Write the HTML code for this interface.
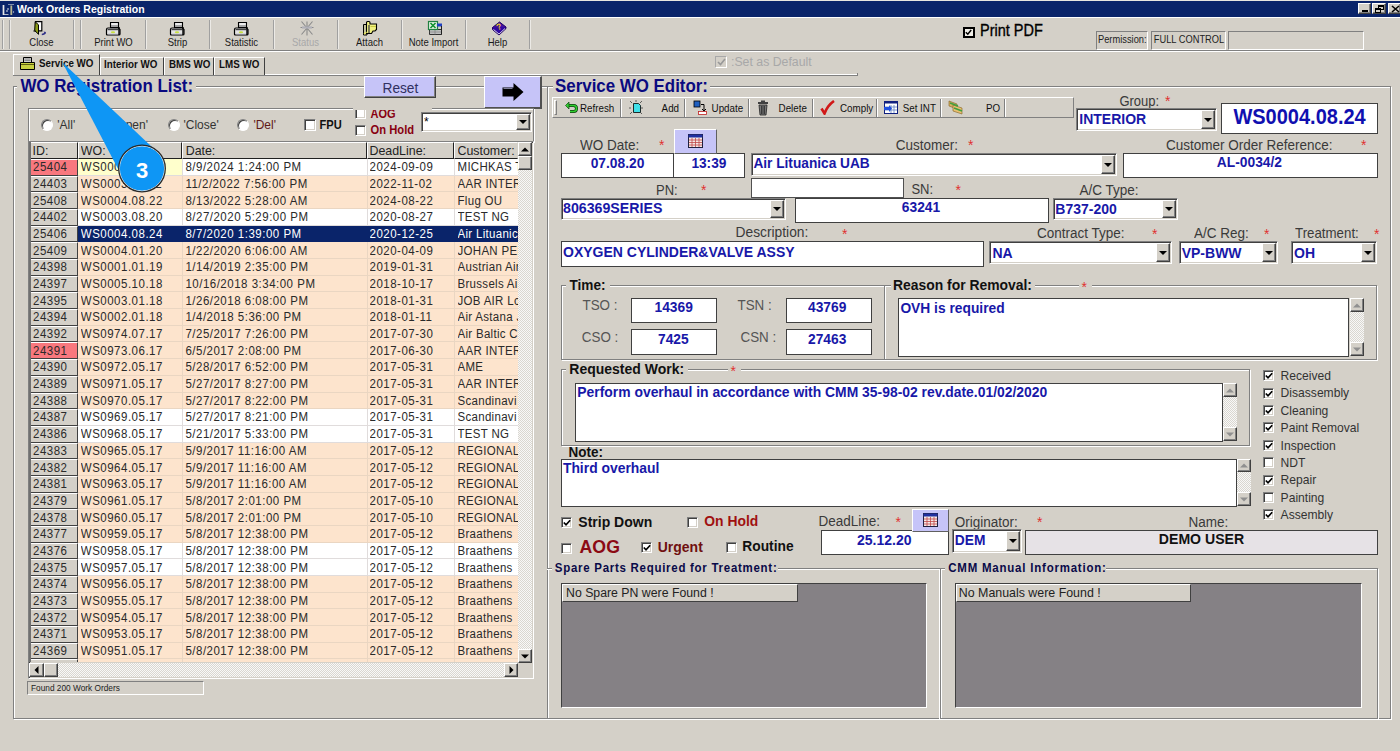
<!DOCTYPE html><html><head><meta charset="utf-8">
<style>
*{box-sizing:border-box;margin:0;padding:0}
html,body{width:1400px;height:751px;overflow:hidden;background:#D4D0C8;font-family:"Liberation Sans",sans-serif;font-size:11px;color:#000;position:relative}
.a{position:absolute}
.t{position:absolute;white-space:nowrap;line-height:1;transform:scaleY(1.08);transform-origin:0 85%}
.fld{position:absolute;background:#fff;border-top:1px solid #808080;border-left:1px solid #808080;border-right:1px solid #fff;border-bottom:1px solid #fff;box-shadow:inset 1px 1px 0 #404040,inset -1px -1px 0 #D4D0C8}
.fld1{position:absolute;background:#fff;border:1px solid #404040;}
.btn{position:absolute;background:#D4D0C8;border-top:1px solid #fff;border-left:1px solid #fff;border-right:1px solid #404040;border-bottom:1px solid #404040;box-shadow:inset -1px -1px 0 #808080}
.grp{position:absolute;border:1px solid #808080;box-shadow:1px 1px 0 #fff,inset 1px 1px 0 #fff}
.vsep{position:absolute;width:2px;border-left:1px solid #808080;border-right:1px solid #fff}
.hsep{position:absolute;height:2px;border-top:1px solid #808080;border-bottom:1px solid #fff}
.nav{color:#0A0A80;font-weight:bold}
.bl{color:#1010A0;font-weight:bold}
.lab{position:absolute;white-space:nowrap;line-height:1;color:#333;font-size:13px}
.ast{position:absolute;white-space:nowrap;line-height:1;color:#E02020;font-size:12px}
.tbl{position:absolute;white-space:nowrap;line-height:1;color:#222;font-size:11px;text-align:center}
.dd{position:absolute;top:1px;right:1px;bottom:1px;width:16px;background:#D4D0C8;border-top:1px solid #fff;border-left:1px solid #fff;border-right:1px solid #404040;border-bottom:1px solid #404040;box-shadow:inset -1px -1px 0 #808080}
.dd:after{content:"";position:absolute;left:50%;top:50%;margin-left:-4px;margin-top:-2px;border-left:4px solid transparent;border-right:4px solid transparent;border-top:4px solid #000}
.cb{position:absolute;width:13px;height:13px;background:#fff;border-top:1px solid #808080;border-left:1px solid #808080;border-right:1px solid #fff;border-bottom:1px solid #fff;box-shadow:inset 1px 1px 0 #404040,inset -1px -1px 0 #D4D0C8}
.ck:after{content:"";position:absolute;left:2px;top:1px;width:6px;height:3px;border-left:2px solid #000;border-bottom:2px solid #000;transform:rotate(-50deg) translate(-1px,2px)}
.rd{position:absolute;width:12px;height:12px;border-radius:50%;background:#fff;border:1px solid;border-color:#808080 #fff #fff #808080;box-shadow:inset 1px 1px 0 #404040}
/* table */
.hc{position:absolute;top:142px;height:17px;background:#D4D0C8;border-top:1px solid #fff;border-left:1px solid #fff;border-right:1px solid #404040;border-bottom:1px solid #404040;font-size:12px;color:#222;padding:3px 0 0 3px;line-height:1;white-space:nowrap;overflow:hidden}
.rw{position:absolute;left:0;width:1400px;height:17px}
.rw div{position:absolute;top:0;height:17px;line-height:16px;font-size:12px;white-space:nowrap;overflow:hidden;padding-left:3px}
.rw .idc{left:29px;width:49px;border-top:1px solid #fff;border-bottom:1px solid #404040;border-right:1px solid #404040;padding-left:3px;line-height:15px}
.rw .c{border-bottom:1px solid #E6D6C6}
.sb{position:absolute;background:#D4D0C8;border-top:1px solid #fff;border-left:1px solid #fff;border-right:1px solid #404040;border-bottom:1px solid #404040;box-shadow:inset -1px -1px 0 #808080}
.track{position:absolute;background-color:#DAD7D0;background-image:linear-gradient(45deg,#F8F8F8 25%,transparent 25%,transparent 75%,#F8F8F8 75%),linear-gradient(45deg,#F8F8F8 25%,transparent 25%,transparent 75%,#F8F8F8 75%);background-size:2px 2px;background-position:0 0,1px 1px;opacity:1}
.tbt{position:absolute;top:17px;height:33px;text-align:center;font-size:11px;color:#222}
.tbt span{position:absolute;left:0;right:0;top:19px;line-height:1}
.tbt svg{position:absolute;left:50%;top:3px;margin-left:-8px}
.eb{position:absolute;top:97px;height:21px;font-size:10px;color:#222;white-space:nowrap;line-height:1}
</style></head><body>

</head><body>
<div class="a" style="left:0px;top:0px;width:1400px;height:1px;background:#E8E6E0"></div>
<div class="a" style="left:0px;top:1px;width:1400px;height:16px;background:#0A246A"></div>
<svg class="a" style="left:1px;top:2px" width="14" height="13"><path d="M2.5 3v10h5" stroke="#E8E8E8" stroke-width="1.7" fill="none"/><path d="M7 2.5h6" stroke="#8090B0" stroke-width="1" fill="none"/><path d="M10.3 3.5v10" stroke="#B8B890" stroke-width="1.8" fill="none"/><circle cx="7" cy="7" r="0.8" fill="#fff"/><circle cx="6" cy="9" r="0.8" fill="#fff"/><circle cx="12.5" cy="10" r="0.7" fill="#C0C8E0"/></svg>
<div class="t" style="left:17.0px;top:4.1px;font-size:10.5px;color:#fff;font-weight:bold;">Work Orders Registration</div>
<div class="btn" style="left:1358px;top:3px;width:13px;height:11px"><div class="a" style="left:3px;top:6px;width:6px;height:2px;background:#000"></div></div>
<div class="btn" style="left:1372px;top:3px;width:14px;height:11px"><svg class="a" style="left:2px;top:1px" width="9" height="8"><rect x="3.5" y="0.5" width="5" height="4" fill="none" stroke="#000"/><rect x="3" y="0" width="6" height="2" fill="#000"/><rect x="0.5" y="3.5" width="5" height="4" fill="#D4D0C8" stroke="#000"/><rect x="0" y="3" width="6" height="2" fill="#000"/></svg></div>
<div class="btn" style="left:1388px;top:3px;width:13px;height:11px"><svg class="a" style="left:2px;top:1px" width="9" height="8"><path d="M1 1L8 7M8 1L1 7" stroke="#000" stroke-width="1.6"/></svg></div>
<div class="a" style="left:0px;top:17px;width:1400px;height:1px;background:#fff"></div>
<div class="a" style="left:2px;top:20px;width:2px;height:29px;border-left:1px solid #A0A0A0;border-right:1px solid #ECEAE6"></div>
<div class="a" style="left:9px;top:20px;width:2px;height:29px;border-left:1px solid #A0A0A0;border-right:1px solid #ECEAE6"></div>
<div class="a" style="left:73px;top:20px;width:2px;height:29px;border-left:1px solid #A0A0A0;border-right:1px solid #ECEAE6"></div>
<div class="a" style="left:80px;top:20px;width:2px;height:29px;border-left:1px solid #A0A0A0;border-right:1px solid #ECEAE6"></div>
<div class="a" style="left:145px;top:20px;width:2px;height:29px;border-left:1px solid #A0A0A0;border-right:1px solid #ECEAE6"></div>
<div class="a" style="left:209px;top:20px;width:2px;height:29px;border-left:1px solid #A0A0A0;border-right:1px solid #ECEAE6"></div>
<div class="a" style="left:273px;top:20px;width:2px;height:29px;border-left:1px solid #A0A0A0;border-right:1px solid #ECEAE6"></div>
<div class="a" style="left:337px;top:20px;width:2px;height:29px;border-left:1px solid #A0A0A0;border-right:1px solid #ECEAE6"></div>
<div class="a" style="left:401px;top:20px;width:2px;height:29px;border-left:1px solid #A0A0A0;border-right:1px solid #ECEAE6"></div>
<div class="a" style="left:465px;top:20px;width:2px;height:29px;border-left:1px solid #A0A0A0;border-right:1px solid #ECEAE6"></div>
<div class="a" style="left:529px;top:20px;width:2px;height:29px;border-left:1px solid #A0A0A0;border-right:1px solid #ECEAE6"></div>
<div class="hsep" style="left:0px;top:50px;width:1400px;height:2px;"></div>
<svg class="a" style="left:30.5px;top:20px" width="18" height="17"><path d="M4.5 1.7h6.3v9.2h-6.3z" fill="#fff" stroke="#000" stroke-width="1.2"/><path d="M4.2 1.8l3.3 3v9.5l-3.8-3.8z" fill="#8A9A18" stroke="#000" stroke-width="1"/><path d="M2.5 11h2" stroke="#000" stroke-width="1.2"/><path d="M10.8 14.5q2.5 0 3.5-1.8" stroke="#303088" stroke-width="1.5" fill="none"/><path d="M12.5 11.5l2.5 0.5-0.8 2.2z" fill="#303088"/></svg>
<div class="t" style="left:9.5px;width:64.0px;text-align:center;top:37.6px;font-size:9.5px;color:#1a1a1a;">Close</div>
<svg class="a" style="left:104.5px;top:20px" width="18" height="17"><path d="M5.5 2.5h8v5h-8z" fill="#D8D8D8" stroke="#000" stroke-width="1.1"/><path d="M6.5 4h6" stroke="#fff" stroke-width="1"/><path d="M6 6h7" stroke="#707070" stroke-width="1"/><path d="M1.5 9.5q0-1.5 1.5-1.5h10.5l1.5 1.5v4.5q0 1-1 1h-11.5q-1 0-1-1z" fill="#E4E4E4" stroke="#000" stroke-width="1.2"/><path d="M2.5 9.6h11" stroke="#404040" stroke-width="1.2"/><ellipse cx="8" cy="12.3" rx="2.2" ry="1" fill="#C8E040"/><path d="M14 7v8" stroke="#000" stroke-width="1.4"/><path d="M3 14.3h10" stroke="#9090A0" stroke-width="0.8"/></svg>
<div class="t" style="left:81.5px;width:64.0px;text-align:center;top:37.6px;font-size:9.5px;color:#1a1a1a;">Print WO</div>
<svg class="a" style="left:168.5px;top:20px" width="18" height="17"><path d="M5.5 2.5h8v5h-8z" fill="#D8D8D8" stroke="#000" stroke-width="1.1"/><path d="M6.5 4h6" stroke="#fff" stroke-width="1"/><path d="M6 6h7" stroke="#707070" stroke-width="1"/><path d="M1.5 9.5q0-1.5 1.5-1.5h10.5l1.5 1.5v4.5q0 1-1 1h-11.5q-1 0-1-1z" fill="#E4E4E4" stroke="#000" stroke-width="1.2"/><path d="M2.5 9.6h11" stroke="#404040" stroke-width="1.2"/><ellipse cx="8" cy="12.3" rx="2.2" ry="1" fill="#C8E040"/><path d="M14 7v8" stroke="#000" stroke-width="1.4"/><path d="M3 14.3h10" stroke="#9090A0" stroke-width="0.8"/></svg>
<div class="t" style="left:145.5px;width:64.0px;text-align:center;top:37.6px;font-size:9.5px;color:#1a1a1a;">Strip</div>
<svg class="a" style="left:232.5px;top:20px" width="18" height="17"><path d="M5.5 2.5h8v5h-8z" fill="#D8D8D8" stroke="#000" stroke-width="1.1"/><path d="M6.5 4h6" stroke="#fff" stroke-width="1"/><path d="M6 6h7" stroke="#707070" stroke-width="1"/><path d="M1.5 9.5q0-1.5 1.5-1.5h10.5l1.5 1.5v4.5q0 1-1 1h-11.5q-1 0-1-1z" fill="#E4E4E4" stroke="#000" stroke-width="1.2"/><path d="M2.5 9.6h11" stroke="#404040" stroke-width="1.2"/><ellipse cx="8" cy="12.3" rx="2.2" ry="1" fill="#C8E040"/><path d="M14 7v8" stroke="#000" stroke-width="1.4"/><path d="M3 14.3h10" stroke="#9090A0" stroke-width="0.8"/></svg>
<div class="t" style="left:209.5px;width:64.0px;text-align:center;top:37.6px;font-size:9.5px;color:#1a1a1a;">Statistic</div>
<svg class="a" style="left:298.5px;top:20px" width="18" height="17"><path d="M8 1.5v14M1.5 7.5h13M2.5 1.5l11 13M13.5 1.5l-11 13" stroke="#8A8A8A" stroke-width="1.1"/><path d="M3 7.5h10" stroke="#B0B0B8" stroke-width="2.2"/></svg>
<div class="t" style="left:273.5px;width:64.0px;text-align:center;top:37.6px;font-size:9.5px;color:#A8A8A8;">Status</div>
<svg class="a" style="left:361.5px;top:20px" width="18" height="17"><path d="M1.5 4.5h3.5v10.5h-3.5z" fill="#C8C8A0" stroke="#000" stroke-width="1"/><path d="M4.5 2.5q0-1 1-1h1.5q1 0 1 1v1.5h6.5v5.5l-1.5 1.5h-2l-1.5 2.5h-5z" fill="#F0F080" stroke="#000" stroke-width="1.1"/><path d="M7 5v8" stroke="#606050" stroke-width="1.6"/><path d="M8.5 6.5h5.5" stroke="#C8C840" stroke-width="1"/><path d="M2 14l2.5-2" stroke="#E8E860" stroke-width="1.5"/></svg>
<div class="t" style="left:337.5px;width:64.0px;text-align:center;top:37.6px;font-size:9.5px;color:#1a1a1a;">Attach</div>
<svg class="a" style="left:426.5px;top:20px" width="18" height="17"><path d="M2.5 9.5h12v5h-12z" fill="#C0C0C0" stroke="#303030" stroke-width="1"/><path d="M2.5 12h12M8 9.5v5" stroke="#808080" stroke-width="0.7"/><rect x="1.5" y="1.5" width="9" height="8" fill="#E0F0E0" stroke="#208040" stroke-width="1.2"/><path d="M3.5 3l5 5M8.5 3l-5 5" stroke="#109030" stroke-width="1.6"/><rect x="10" y="3.5" width="5" height="3" fill="#2040C0"/><path d="M14.5 6v8.5" stroke="#202020" stroke-width="1"/></svg>
<div class="t" style="left:401.5px;width:64.0px;text-align:center;top:37.6px;font-size:9.5px;color:#1a1a1a;">Note Import</div>
<svg class="a" style="left:490.5px;top:20px" width="18" height="17"><path d="M1.5 7.5l7-5.5 6.5 5-7 6z" fill="#4010A0" stroke="#200060" stroke-width="1"/><path d="M1.5 7.5v2l6.5 5.5 7-6.5v-1.5" fill="#3008A0" stroke="#200060" stroke-width="1"/><path d="M2.5 9.5l5.5 4.5 6-5.5" stroke="#E0E0F0" stroke-width="0.9" fill="none"/><text x="5.5" y="9.5" font-size="8.5" font-weight="bold" fill="#F0D020" font-family="Liberation Sans" transform="rotate(-20 8 7)">?</text></svg>
<div class="t" style="left:465.5px;width:64.0px;text-align:center;top:37.6px;font-size:9.5px;color:#1a1a1a;">Help</div>
<div class="a" style="left:963px;top:27px;width:12px;height:11px;border:2px solid #000;background:#F0EEE8"></div>
<svg class="a" style="left:965px;top:29px" width="7" height="7"><path d="M0.8 3.2l2 2L6.2 1" stroke="#000" stroke-width="1.5" fill="none"/></svg>
<div class="t" style="left:980.0px;top:23.5px;font-size:14.5px;color:#000;-webkit-text-stroke:0.3px #000">Print PDF</div>
<div class="a" style="left:1096px;top:31px;width:52px;height:19px;border:1px solid;border-color:#808080 #fff #fff #808080"></div>
<div class="a" style="left:1151px;top:31px;width:75px;height:19px;border:1px solid;border-color:#808080 #fff #fff #808080"></div>
<div class="a" style="left:1228px;top:31px;width:136px;height:19px;border:1px solid;border-color:#808080 #fff #fff #808080"></div>
<div class="t" style="left:1098.0px;top:36.1px;font-size:9.3px;color:#222;">Permission:</div>
<div class="t" style="left:1153.8px;top:36.1px;font-size:9.3px;color:#222;">FULL CONTROL</div>
<div class="a" style="left:13px;top:74px;width:845px;height:1px;background:#fff"></div>
<div class="a" style="left:13px;top:75px;width:845px;height:1px;background:#808080"></div>
<div class="a" style="left:857px;top:73px;width:1px;height:3px;background:#808080"></div>
<div class="a" style="left:13px;top:54px;width:87px;height:21px;background:#D4D0C8;border-top:1px solid #fff;border-left:1px solid #fff;border-right:1px solid #404040"></div>
<svg class="a" style="left:20px;top:57px" width="15" height="13"><path d="M3.5 0.5h8v5h-8z" fill="#D0D0D0" stroke="#000"/><path d="M4.5 2h6M4.5 3.5h6" stroke="#606060" stroke-width="0.6"/><path d="M0.5 5.5h14v7h-14z" fill="#C8D040" stroke="#000"/><path d="M1 7.5h13" stroke="#606010"/></svg>
<div class="t" style="left:39.0px;top:58.7px;font-size:9.8px;color:#111;font-weight:bold;">Service WO</div>
<div class="a" style="left:100px;top:57px;width:64px;height:18px;background:#D4D0C8;border-top:1px solid #fff;border-left:1px solid #fff;border-right:1px solid #404040"></div>
<div class="t" style="left:104.0px;top:60.0px;font-size:9.8px;color:#111;font-weight:bold;">Interior WO</div>
<div class="a" style="left:164px;top:57px;width:50px;height:18px;background:#D4D0C8;border-top:1px solid #fff;border-left:1px solid #fff;border-right:1px solid #404040"></div>
<div class="t" style="left:169.0px;top:60.0px;font-size:9.8px;color:#111;font-weight:bold;">BMS WO</div>
<div class="a" style="left:214px;top:57px;width:51px;height:18px;background:#D4D0C8;border-top:1px solid #fff;border-left:1px solid #fff;border-right:1px solid #404040"></div>
<div class="t" style="left:219.0px;top:60.0px;font-size:9.8px;color:#111;font-weight:bold;">LMS WO</div>
<div class="a" style="left:715px;top:56px;width:12px;height:12px;border:1px solid;border-color:#A8A8A8 #fff #fff #A8A8A8;background:#D4D0C8"></div>
<svg class="a" style="left:717px;top:58px" width="9" height="8"><path d="M1 4l2.5 2.5L8 1" stroke="#989898" stroke-width="1.6" fill="none"/></svg>
<div class="t" style="left:731.0px;top:56.0px;font-size:12.3px;color:#A8A8A8;">:Set as Default</div>
<div class="grp" style="left:13px;top:86px;width:535px;height:633px;"></div>
<div class="a" style="left:17px;top:77px;width:179px;height:18px;background:#D4D0C8"></div>
<div class="t" style="left:20.4px;top:78.8px;font-size:16.9px;color:#0A0A80;font-weight:bold;">WO Registration List:</div>
<div class="a" style="left:364px;top:76px;width:72px;height:22px;background:#C6C4F8;border-top:1px solid #fff;border-left:1px solid #fff;border-right:1px solid #404040;border-bottom:1px solid #404040;box-shadow:inset -1px -1px 0 #808080"></div>
<div class="t" style="left:382.5px;top:82.4px;font-size:13.7px;color:#303060;">Reset</div>
<div class="a" style="left:484px;top:76px;width:58px;height:33px;background:#C6C4F8;border-top:1px solid #fff;border-left:1px solid #fff;border-right:2px solid #505050;border-bottom:2px solid #505050"></div>
<svg class="a" style="left:501px;top:82px" width="24" height="20"><path d="M1.5 5.5h11V1l10 9-10 9v-4.5h-11z" fill="#000"/><path d="M2.5 6.5h9" stroke="#A0A0C0" stroke-width="0.8"/></svg>
<div class="grp" style="left:28px;top:108px;width:506px;height:34px;"></div>
<div class="rd" style="left:41px;top:118.5px"></div>
<div class="t" style="left:57.3px;top:119.4px;font-size:12px;color:#333;">'All'</div>
<div class="rd" style="left:98px;top:118.5px"></div>
<div class="t" style="left:114.0px;top:119.4px;font-size:12px;color:#333;">'Open'</div>
<div class="rd" style="left:168px;top:118.5px"></div>
<div class="t" style="left:183.5px;top:119.4px;font-size:12px;color:#333;">'Close'</div>
<div class="rd" style="left:237px;top:118.5px"></div>
<div class="t" style="left:253.4px;top:119.4px;font-size:12px;color:#601818;">'Del'</div>
<div class="cb" style="left:304px;top:119px;width:12px;height:12px"></div>
<div class="t" style="left:319.5px;top:120.1px;font-size:11.1px;color:#111;font-weight:bold;">FPU</div>
<div class="cb" style="left:355px;top:108px;width:11px;height:11px"></div>
<div class="t" style="left:370.6px;top:109.2px;font-size:11px;color:#880010;font-weight:bold;transform:scaleY(1.22);transform-origin:0 85%">AOG</div>
<div class="cb" style="left:355px;top:125px;width:11px;height:11px"></div>
<div class="t" style="left:370.6px;top:124.8px;font-size:11.2px;color:#880010;font-weight:bold;transform:scaleY(1.15);transform-origin:0 85%">On Hold</div>
<div class="a" style="left:353px;top:106px;width:79px;height:4px;background:#D4D0C8"></div>
<div class="fld" style="left:421px;top:112px;width:111px;height:20px"><div class="t" style="left:2px;top:3px;font-size:12px;color:#000">*</div><div class="dd" style="width:14px"></div></div>
<div class="a" style="left:28px;top:141px;width:506px;height:538px;border:1px solid;border-color:#808080 #fff #fff #808080;box-shadow:inset 1px 1px 0 #404040;background:#D4D0C8"></div>
<div class="track" style="left:518px;top:156px;width:14px;height:494px"></div>
<div class="track" style="left:30px;top:663px;width:488px;height:14px"></div>
<div class="a" style="left:29px;top:142px;width:49px;height:17px;background:#D4D0C8;border-top:1px solid #fff;border-left:1px solid #fff;border-right:1px solid #202020;border-bottom:1px solid #202020"></div>
<div class="t" style="left:32.5px;top:144.5px;font-size:12.4px;color:#222;width:44.5px;overflow:hidden">ID:</div>
<div class="a" style="left:78px;top:142px;width:104px;height:17px;background:#D4D0C8;border-top:1px solid #fff;border-left:1px solid #fff;border-right:1px solid #202020;border-bottom:1px solid #202020"></div>
<div class="t" style="left:80.8px;top:144.5px;font-size:12.4px;color:#222;width:100.2px;overflow:hidden">WO:</div>
<div class="a" style="left:182px;top:142px;width:185px;height:17px;background:#D4D0C8;border-top:1px solid #fff;border-left:1px solid #fff;border-right:1px solid #202020;border-bottom:1px solid #202020"></div>
<div class="t" style="left:185.7px;top:144.5px;font-size:12.4px;color:#222;width:180.3px;overflow:hidden">Date:</div>
<div class="a" style="left:367px;top:142px;width:87px;height:17px;background:#D4D0C8;border-top:1px solid #fff;border-left:1px solid #fff;border-right:1px solid #202020;border-bottom:1px solid #202020"></div>
<div class="t" style="left:369.5px;top:144.5px;font-size:12.4px;color:#222;width:83.5px;overflow:hidden">DeadLine:</div>
<div class="a" style="left:454px;top:142px;width:64px;height:17px;background:#D4D0C8;border-top:1px solid #fff;border-left:1px solid #fff;border-right:1px solid #D4D0C8;border-bottom:1px solid #202020"></div>
<div class="t" style="left:457.5px;top:144.5px;font-size:12.4px;color:#222;width:59.5px;overflow:hidden">Customer:</div>
<div class="a" style="left:0;top:0;width:518px;height:662px;overflow:hidden">
<div class="a" style="left:29px;top:159px;width:49px;height:17px;background:#F8787E;border-top:1px solid #fff;border-bottom:1px solid #404040;border-right:1px solid #404040"></div>
<div class="t" style="left:33.0px;top:162.2px;font-size:11.5px;color:#2a2a2a;letter-spacing:0.5px;">25404</div>
<div class="a" style="left:78px;top:159px;width:104px;height:17px;background:#FFFFCC;border-bottom:1px solid #E0DCDC;"></div>
<div class="t" style="left:80.8px;top:162.2px;font-size:11.5px;color:#2a2a2a;letter-spacing:0.5px;width:101.2px;overflow:hidden">WS0004.08.24</div>
<div class="a" style="left:182px;top:159px;width:185px;height:17px;background:#FFFFFF;border-bottom:1px solid #E0DCDC;border-left:1px solid #E0DCDC;"></div>
<div class="t" style="left:185.4px;top:162.2px;font-size:11.5px;color:#2a2a2a;letter-spacing:0.5px;width:181.6px;overflow:hidden">8/9/2024 1:24:00 PM</div>
<div class="a" style="left:367px;top:159px;width:87px;height:17px;background:#FFFFFF;border-bottom:1px solid #E0DCDC;border-left:1px solid #E0DCDC;"></div>
<div class="t" style="left:369.5px;top:162.2px;font-size:11.5px;color:#2a2a2a;letter-spacing:0.5px;width:84.5px;overflow:hidden">2024-09-09</div>
<div class="a" style="left:454px;top:159px;width:64px;height:17px;background:#FFFFFF;border-bottom:1px solid #E0DCDC;border-left:1px solid #E0DCDC;"></div>
<div class="t" style="left:457.5px;top:162.2px;font-size:11.5px;color:#2a2a2a;letter-spacing:0.3px;width:60.5px;overflow:hidden">MICHKAS T</div>
<div class="a" style="left:29px;top:176px;width:49px;height:16px;background:#D4D0C8;border-top:1px solid #fff;border-bottom:1px solid #404040;border-right:1px solid #404040"></div>
<div class="t" style="left:33.0px;top:178.9px;font-size:11.5px;color:#2a2a2a;letter-spacing:0.5px;">24403</div>
<div class="a" style="left:78px;top:176px;width:104px;height:16px;background:#FDE4CD;border-bottom:1px solid #EAD6C2;"></div>
<div class="t" style="left:80.8px;top:178.9px;font-size:11.5px;color:#2a2a2a;letter-spacing:0.5px;width:101.2px;overflow:hidden">WS0003.11.22</div>
<div class="a" style="left:182px;top:176px;width:185px;height:16px;background:#FDE4CD;border-bottom:1px solid #EAD6C2;border-left:1px solid #EAD6C2;"></div>
<div class="t" style="left:185.4px;top:178.9px;font-size:11.5px;color:#2a2a2a;letter-spacing:0.5px;width:181.6px;overflow:hidden">11/2/2022 7:56:00 PM</div>
<div class="a" style="left:367px;top:176px;width:87px;height:16px;background:#FDE4CD;border-bottom:1px solid #EAD6C2;border-left:1px solid #EAD6C2;"></div>
<div class="t" style="left:369.5px;top:178.9px;font-size:11.5px;color:#2a2a2a;letter-spacing:0.5px;width:84.5px;overflow:hidden">2022-11-02</div>
<div class="a" style="left:454px;top:176px;width:64px;height:16px;background:#FDE4CD;border-bottom:1px solid #EAD6C2;border-left:1px solid #EAD6C2;"></div>
<div class="t" style="left:457.5px;top:178.9px;font-size:11.5px;color:#2a2a2a;letter-spacing:0.3px;width:60.5px;overflow:hidden">AAR INTER</div>
<div class="a" style="left:29px;top:192px;width:49px;height:17px;background:#D4D0C8;border-top:1px solid #fff;border-bottom:1px solid #404040;border-right:1px solid #404040"></div>
<div class="t" style="left:33.0px;top:195.6px;font-size:11.5px;color:#2a2a2a;letter-spacing:0.5px;">25408</div>
<div class="a" style="left:78px;top:192px;width:104px;height:17px;background:#FDE4CD;border-bottom:1px solid #EAD6C2;"></div>
<div class="t" style="left:80.8px;top:195.6px;font-size:11.5px;color:#2a2a2a;letter-spacing:0.5px;width:101.2px;overflow:hidden">WS0004.08.22</div>
<div class="a" style="left:182px;top:192px;width:185px;height:17px;background:#FDE4CD;border-bottom:1px solid #EAD6C2;border-left:1px solid #EAD6C2;"></div>
<div class="t" style="left:185.4px;top:195.6px;font-size:11.5px;color:#2a2a2a;letter-spacing:0.5px;width:181.6px;overflow:hidden">8/13/2022 5:28:00 AM</div>
<div class="a" style="left:367px;top:192px;width:87px;height:17px;background:#FDE4CD;border-bottom:1px solid #EAD6C2;border-left:1px solid #EAD6C2;"></div>
<div class="t" style="left:369.5px;top:195.6px;font-size:11.5px;color:#2a2a2a;letter-spacing:0.5px;width:84.5px;overflow:hidden">2024-08-22</div>
<div class="a" style="left:454px;top:192px;width:64px;height:17px;background:#FDE4CD;border-bottom:1px solid #EAD6C2;border-left:1px solid #EAD6C2;"></div>
<div class="t" style="left:457.5px;top:195.6px;font-size:11.5px;color:#2a2a2a;letter-spacing:0.3px;width:60.5px;overflow:hidden">Flug OU</div>
<div class="a" style="left:29px;top:209px;width:49px;height:17px;background:#D4D0C8;border-top:1px solid #fff;border-bottom:1px solid #404040;border-right:1px solid #404040"></div>
<div class="t" style="left:33.0px;top:212.3px;font-size:11.5px;color:#2a2a2a;letter-spacing:0.5px;">24402</div>
<div class="a" style="left:78px;top:209px;width:104px;height:17px;background:#FFFFFF;border-bottom:1px solid #E0DCDC;"></div>
<div class="t" style="left:80.8px;top:212.3px;font-size:11.5px;color:#2a2a2a;letter-spacing:0.5px;width:101.2px;overflow:hidden">WS0003.08.20</div>
<div class="a" style="left:182px;top:209px;width:185px;height:17px;background:#FFFFFF;border-bottom:1px solid #E0DCDC;border-left:1px solid #E0DCDC;"></div>
<div class="t" style="left:185.4px;top:212.3px;font-size:11.5px;color:#2a2a2a;letter-spacing:0.5px;width:181.6px;overflow:hidden">8/27/2020 5:29:00 PM</div>
<div class="a" style="left:367px;top:209px;width:87px;height:17px;background:#FFFFFF;border-bottom:1px solid #E0DCDC;border-left:1px solid #E0DCDC;"></div>
<div class="t" style="left:369.5px;top:212.3px;font-size:11.5px;color:#2a2a2a;letter-spacing:0.5px;width:84.5px;overflow:hidden">2020-08-27</div>
<div class="a" style="left:454px;top:209px;width:64px;height:17px;background:#FFFFFF;border-bottom:1px solid #E0DCDC;border-left:1px solid #E0DCDC;"></div>
<div class="t" style="left:457.5px;top:212.3px;font-size:11.5px;color:#2a2a2a;letter-spacing:0.3px;width:60.5px;overflow:hidden">TEST NG</div>
<div class="a" style="left:29px;top:226px;width:49px;height:16px;background:#D4D0C8;border-top:1px solid #fff;border-bottom:1px solid #404040;border-right:1px solid #404040"></div>
<div class="t" style="left:33.0px;top:228.9px;font-size:11.5px;color:#2a2a2a;letter-spacing:0.5px;">25406</div>
<div class="a" style="left:78px;top:226px;width:104px;height:16px;background:#0A246A;border-bottom:1px solid #0A246A;"></div>
<div class="t" style="left:80.8px;top:228.9px;font-size:11.5px;color:#fff;letter-spacing:0.5px;width:101.2px;overflow:hidden">WS0004.08.24</div>
<div class="a" style="left:182px;top:226px;width:185px;height:16px;background:#0A246A;border-bottom:1px solid #0A246A;border-left:1px solid #0A246A;"></div>
<div class="t" style="left:185.4px;top:228.9px;font-size:11.5px;color:#fff;letter-spacing:0.5px;width:181.6px;overflow:hidden">8/7/2020 1:39:00 PM</div>
<div class="a" style="left:367px;top:226px;width:87px;height:16px;background:#0A246A;border-bottom:1px solid #0A246A;border-left:1px solid #0A246A;"></div>
<div class="t" style="left:369.5px;top:228.9px;font-size:11.5px;color:#fff;letter-spacing:0.5px;width:84.5px;overflow:hidden">2020-12-25</div>
<div class="a" style="left:454px;top:226px;width:64px;height:16px;background:#0A246A;border-bottom:1px solid #0A246A;border-left:1px solid #0A246A;"></div>
<div class="t" style="left:457.5px;top:228.9px;font-size:11.5px;color:#fff;letter-spacing:0.3px;width:60.5px;overflow:hidden">Air Lituanica</div>
<div class="a" style="left:29px;top:242px;width:49px;height:17px;background:#D4D0C8;border-top:1px solid #fff;border-bottom:1px solid #404040;border-right:1px solid #404040"></div>
<div class="t" style="left:33.0px;top:245.6px;font-size:11.5px;color:#2a2a2a;letter-spacing:0.5px;">25409</div>
<div class="a" style="left:78px;top:242px;width:104px;height:17px;background:#FDE4CD;border-bottom:1px solid #EAD6C2;"></div>
<div class="t" style="left:80.8px;top:245.6px;font-size:11.5px;color:#2a2a2a;letter-spacing:0.5px;width:101.2px;overflow:hidden">WS0004.01.20</div>
<div class="a" style="left:182px;top:242px;width:185px;height:17px;background:#FDE4CD;border-bottom:1px solid #EAD6C2;border-left:1px solid #EAD6C2;"></div>
<div class="t" style="left:185.4px;top:245.6px;font-size:11.5px;color:#2a2a2a;letter-spacing:0.5px;width:181.6px;overflow:hidden">1/22/2020 6:06:00 AM</div>
<div class="a" style="left:367px;top:242px;width:87px;height:17px;background:#FDE4CD;border-bottom:1px solid #EAD6C2;border-left:1px solid #EAD6C2;"></div>
<div class="t" style="left:369.5px;top:245.6px;font-size:11.5px;color:#2a2a2a;letter-spacing:0.5px;width:84.5px;overflow:hidden">2020-04-09</div>
<div class="a" style="left:454px;top:242px;width:64px;height:17px;background:#FDE4CD;border-bottom:1px solid #EAD6C2;border-left:1px solid #EAD6C2;"></div>
<div class="t" style="left:457.5px;top:245.6px;font-size:11.5px;color:#2a2a2a;letter-spacing:0.3px;width:60.5px;overflow:hidden">JOHAN PEN</div>
<div class="a" style="left:29px;top:259px;width:49px;height:17px;background:#D4D0C8;border-top:1px solid #fff;border-bottom:1px solid #404040;border-right:1px solid #404040"></div>
<div class="t" style="left:33.0px;top:262.3px;font-size:11.5px;color:#2a2a2a;letter-spacing:0.5px;">24398</div>
<div class="a" style="left:78px;top:259px;width:104px;height:17px;background:#FDE4CD;border-bottom:1px solid #EAD6C2;"></div>
<div class="t" style="left:80.8px;top:262.3px;font-size:11.5px;color:#2a2a2a;letter-spacing:0.5px;width:101.2px;overflow:hidden">WS0001.01.19</div>
<div class="a" style="left:182px;top:259px;width:185px;height:17px;background:#FDE4CD;border-bottom:1px solid #EAD6C2;border-left:1px solid #EAD6C2;"></div>
<div class="t" style="left:185.4px;top:262.3px;font-size:11.5px;color:#2a2a2a;letter-spacing:0.5px;width:181.6px;overflow:hidden">1/14/2019 2:35:00 PM</div>
<div class="a" style="left:367px;top:259px;width:87px;height:17px;background:#FDE4CD;border-bottom:1px solid #EAD6C2;border-left:1px solid #EAD6C2;"></div>
<div class="t" style="left:369.5px;top:262.3px;font-size:11.5px;color:#2a2a2a;letter-spacing:0.5px;width:84.5px;overflow:hidden">2019-01-31</div>
<div class="a" style="left:454px;top:259px;width:64px;height:17px;background:#FDE4CD;border-bottom:1px solid #EAD6C2;border-left:1px solid #EAD6C2;"></div>
<div class="t" style="left:457.5px;top:262.3px;font-size:11.5px;color:#2a2a2a;letter-spacing:0.3px;width:60.5px;overflow:hidden">Austrian Air</div>
<div class="a" style="left:29px;top:276px;width:49px;height:16px;background:#D4D0C8;border-top:1px solid #fff;border-bottom:1px solid #404040;border-right:1px solid #404040"></div>
<div class="t" style="left:33.0px;top:279.0px;font-size:11.5px;color:#2a2a2a;letter-spacing:0.5px;">24397</div>
<div class="a" style="left:78px;top:276px;width:104px;height:16px;background:#FDE4CD;border-bottom:1px solid #EAD6C2;"></div>
<div class="t" style="left:80.8px;top:279.0px;font-size:11.5px;color:#2a2a2a;letter-spacing:0.5px;width:101.2px;overflow:hidden">WS0005.10.18</div>
<div class="a" style="left:182px;top:276px;width:185px;height:16px;background:#FDE4CD;border-bottom:1px solid #EAD6C2;border-left:1px solid #EAD6C2;"></div>
<div class="t" style="left:185.4px;top:279.0px;font-size:11.5px;color:#2a2a2a;letter-spacing:0.5px;width:181.6px;overflow:hidden">10/16/2018 3:34:00 PM</div>
<div class="a" style="left:367px;top:276px;width:87px;height:16px;background:#FDE4CD;border-bottom:1px solid #EAD6C2;border-left:1px solid #EAD6C2;"></div>
<div class="t" style="left:369.5px;top:279.0px;font-size:11.5px;color:#2a2a2a;letter-spacing:0.5px;width:84.5px;overflow:hidden">2018-10-17</div>
<div class="a" style="left:454px;top:276px;width:64px;height:16px;background:#FDE4CD;border-bottom:1px solid #EAD6C2;border-left:1px solid #EAD6C2;"></div>
<div class="t" style="left:457.5px;top:279.0px;font-size:11.5px;color:#2a2a2a;letter-spacing:0.3px;width:60.5px;overflow:hidden">Brussels Air</div>
<div class="a" style="left:29px;top:292px;width:49px;height:17px;background:#D4D0C8;border-top:1px solid #fff;border-bottom:1px solid #404040;border-right:1px solid #404040"></div>
<div class="t" style="left:33.0px;top:295.7px;font-size:11.5px;color:#2a2a2a;letter-spacing:0.5px;">24395</div>
<div class="a" style="left:78px;top:292px;width:104px;height:17px;background:#FDE4CD;border-bottom:1px solid #EAD6C2;"></div>
<div class="t" style="left:80.8px;top:295.7px;font-size:11.5px;color:#2a2a2a;letter-spacing:0.5px;width:101.2px;overflow:hidden">WS0003.01.18</div>
<div class="a" style="left:182px;top:292px;width:185px;height:17px;background:#FDE4CD;border-bottom:1px solid #EAD6C2;border-left:1px solid #EAD6C2;"></div>
<div class="t" style="left:185.4px;top:295.7px;font-size:11.5px;color:#2a2a2a;letter-spacing:0.5px;width:181.6px;overflow:hidden">1/26/2018 6:08:00 PM</div>
<div class="a" style="left:367px;top:292px;width:87px;height:17px;background:#FDE4CD;border-bottom:1px solid #EAD6C2;border-left:1px solid #EAD6C2;"></div>
<div class="t" style="left:369.5px;top:295.7px;font-size:11.5px;color:#2a2a2a;letter-spacing:0.5px;width:84.5px;overflow:hidden">2018-01-31</div>
<div class="a" style="left:454px;top:292px;width:64px;height:17px;background:#FDE4CD;border-bottom:1px solid #EAD6C2;border-left:1px solid #EAD6C2;"></div>
<div class="t" style="left:457.5px;top:295.7px;font-size:11.5px;color:#2a2a2a;letter-spacing:0.3px;width:60.5px;overflow:hidden">JOB AIR Lc</div>
<div class="a" style="left:29px;top:309px;width:49px;height:17px;background:#D4D0C8;border-top:1px solid #fff;border-bottom:1px solid #404040;border-right:1px solid #404040"></div>
<div class="t" style="left:33.0px;top:312.3px;font-size:11.5px;color:#2a2a2a;letter-spacing:0.5px;">24394</div>
<div class="a" style="left:78px;top:309px;width:104px;height:17px;background:#FDE4CD;border-bottom:1px solid #EAD6C2;"></div>
<div class="t" style="left:80.8px;top:312.3px;font-size:11.5px;color:#2a2a2a;letter-spacing:0.5px;width:101.2px;overflow:hidden">WS0002.01.18</div>
<div class="a" style="left:182px;top:309px;width:185px;height:17px;background:#FDE4CD;border-bottom:1px solid #EAD6C2;border-left:1px solid #EAD6C2;"></div>
<div class="t" style="left:185.4px;top:312.3px;font-size:11.5px;color:#2a2a2a;letter-spacing:0.5px;width:181.6px;overflow:hidden">1/4/2018 5:36:00 PM</div>
<div class="a" style="left:367px;top:309px;width:87px;height:17px;background:#FDE4CD;border-bottom:1px solid #EAD6C2;border-left:1px solid #EAD6C2;"></div>
<div class="t" style="left:369.5px;top:312.3px;font-size:11.5px;color:#2a2a2a;letter-spacing:0.5px;width:84.5px;overflow:hidden">2018-01-11</div>
<div class="a" style="left:454px;top:309px;width:64px;height:17px;background:#FDE4CD;border-bottom:1px solid #EAD6C2;border-left:1px solid #EAD6C2;"></div>
<div class="t" style="left:457.5px;top:312.3px;font-size:11.5px;color:#2a2a2a;letter-spacing:0.3px;width:60.5px;overflow:hidden">Air Astana J</div>
<div class="a" style="left:29px;top:326px;width:49px;height:16px;background:#D4D0C8;border-top:1px solid #fff;border-bottom:1px solid #404040;border-right:1px solid #404040"></div>
<div class="t" style="left:33.0px;top:329.0px;font-size:11.5px;color:#2a2a2a;letter-spacing:0.5px;">24392</div>
<div class="a" style="left:78px;top:326px;width:104px;height:16px;background:#FDE4CD;border-bottom:1px solid #EAD6C2;"></div>
<div class="t" style="left:80.8px;top:329.0px;font-size:11.5px;color:#2a2a2a;letter-spacing:0.5px;width:101.2px;overflow:hidden">WS0974.07.17</div>
<div class="a" style="left:182px;top:326px;width:185px;height:16px;background:#FDE4CD;border-bottom:1px solid #EAD6C2;border-left:1px solid #EAD6C2;"></div>
<div class="t" style="left:185.4px;top:329.0px;font-size:11.5px;color:#2a2a2a;letter-spacing:0.5px;width:181.6px;overflow:hidden">7/25/2017 7:26:00 PM</div>
<div class="a" style="left:367px;top:326px;width:87px;height:16px;background:#FDE4CD;border-bottom:1px solid #EAD6C2;border-left:1px solid #EAD6C2;"></div>
<div class="t" style="left:369.5px;top:329.0px;font-size:11.5px;color:#2a2a2a;letter-spacing:0.5px;width:84.5px;overflow:hidden">2017-07-30</div>
<div class="a" style="left:454px;top:326px;width:64px;height:16px;background:#FDE4CD;border-bottom:1px solid #EAD6C2;border-left:1px solid #EAD6C2;"></div>
<div class="t" style="left:457.5px;top:329.0px;font-size:11.5px;color:#2a2a2a;letter-spacing:0.3px;width:60.5px;overflow:hidden">Air Baltic C</div>
<div class="a" style="left:29px;top:342px;width:49px;height:17px;background:#F8787E;border-top:1px solid #fff;border-bottom:1px solid #404040;border-right:1px solid #404040"></div>
<div class="t" style="left:33.0px;top:345.7px;font-size:11.5px;color:#2a2a2a;letter-spacing:0.5px;">24391</div>
<div class="a" style="left:78px;top:342px;width:104px;height:17px;background:#FDE4CD;border-bottom:1px solid #EAD6C2;"></div>
<div class="t" style="left:80.8px;top:345.7px;font-size:11.5px;color:#2a2a2a;letter-spacing:0.5px;width:101.2px;overflow:hidden">WS0973.06.17</div>
<div class="a" style="left:182px;top:342px;width:185px;height:17px;background:#FDE4CD;border-bottom:1px solid #EAD6C2;border-left:1px solid #EAD6C2;"></div>
<div class="t" style="left:185.4px;top:345.7px;font-size:11.5px;color:#2a2a2a;letter-spacing:0.5px;width:181.6px;overflow:hidden">6/5/2017 2:08:00 PM</div>
<div class="a" style="left:367px;top:342px;width:87px;height:17px;background:#FDE4CD;border-bottom:1px solid #EAD6C2;border-left:1px solid #EAD6C2;"></div>
<div class="t" style="left:369.5px;top:345.7px;font-size:11.5px;color:#2a2a2a;letter-spacing:0.5px;width:84.5px;overflow:hidden">2017-06-30</div>
<div class="a" style="left:454px;top:342px;width:64px;height:17px;background:#FDE4CD;border-bottom:1px solid #EAD6C2;border-left:1px solid #EAD6C2;"></div>
<div class="t" style="left:457.5px;top:345.7px;font-size:11.5px;color:#2a2a2a;letter-spacing:0.3px;width:60.5px;overflow:hidden">AAR INTER</div>
<div class="a" style="left:29px;top:359px;width:49px;height:17px;background:#D4D0C8;border-top:1px solid #fff;border-bottom:1px solid #404040;border-right:1px solid #404040"></div>
<div class="t" style="left:33.0px;top:362.4px;font-size:11.5px;color:#2a2a2a;letter-spacing:0.5px;">24390</div>
<div class="a" style="left:78px;top:359px;width:104px;height:17px;background:#FDE4CD;border-bottom:1px solid #EAD6C2;"></div>
<div class="t" style="left:80.8px;top:362.4px;font-size:11.5px;color:#2a2a2a;letter-spacing:0.5px;width:101.2px;overflow:hidden">WS0972.05.17</div>
<div class="a" style="left:182px;top:359px;width:185px;height:17px;background:#FDE4CD;border-bottom:1px solid #EAD6C2;border-left:1px solid #EAD6C2;"></div>
<div class="t" style="left:185.4px;top:362.4px;font-size:11.5px;color:#2a2a2a;letter-spacing:0.5px;width:181.6px;overflow:hidden">5/28/2017 6:52:00 PM</div>
<div class="a" style="left:367px;top:359px;width:87px;height:17px;background:#FDE4CD;border-bottom:1px solid #EAD6C2;border-left:1px solid #EAD6C2;"></div>
<div class="t" style="left:369.5px;top:362.4px;font-size:11.5px;color:#2a2a2a;letter-spacing:0.5px;width:84.5px;overflow:hidden">2017-05-31</div>
<div class="a" style="left:454px;top:359px;width:64px;height:17px;background:#FDE4CD;border-bottom:1px solid #EAD6C2;border-left:1px solid #EAD6C2;"></div>
<div class="t" style="left:457.5px;top:362.4px;font-size:11.5px;color:#2a2a2a;letter-spacing:0.3px;width:60.5px;overflow:hidden">AME</div>
<div class="a" style="left:29px;top:376px;width:49px;height:17px;background:#D4D0C8;border-top:1px solid #fff;border-bottom:1px solid #404040;border-right:1px solid #404040"></div>
<div class="t" style="left:33.0px;top:379.1px;font-size:11.5px;color:#2a2a2a;letter-spacing:0.5px;">24389</div>
<div class="a" style="left:78px;top:376px;width:104px;height:17px;background:#FDE4CD;border-bottom:1px solid #EAD6C2;"></div>
<div class="t" style="left:80.8px;top:379.1px;font-size:11.5px;color:#2a2a2a;letter-spacing:0.5px;width:101.2px;overflow:hidden">WS0971.05.17</div>
<div class="a" style="left:182px;top:376px;width:185px;height:17px;background:#FDE4CD;border-bottom:1px solid #EAD6C2;border-left:1px solid #EAD6C2;"></div>
<div class="t" style="left:185.4px;top:379.1px;font-size:11.5px;color:#2a2a2a;letter-spacing:0.5px;width:181.6px;overflow:hidden">5/27/2017 8:27:00 PM</div>
<div class="a" style="left:367px;top:376px;width:87px;height:17px;background:#FDE4CD;border-bottom:1px solid #EAD6C2;border-left:1px solid #EAD6C2;"></div>
<div class="t" style="left:369.5px;top:379.1px;font-size:11.5px;color:#2a2a2a;letter-spacing:0.5px;width:84.5px;overflow:hidden">2017-05-31</div>
<div class="a" style="left:454px;top:376px;width:64px;height:17px;background:#FDE4CD;border-bottom:1px solid #EAD6C2;border-left:1px solid #EAD6C2;"></div>
<div class="t" style="left:457.5px;top:379.1px;font-size:11.5px;color:#2a2a2a;letter-spacing:0.3px;width:60.5px;overflow:hidden">AAR INTER</div>
<div class="a" style="left:29px;top:393px;width:49px;height:16px;background:#D4D0C8;border-top:1px solid #fff;border-bottom:1px solid #404040;border-right:1px solid #404040"></div>
<div class="t" style="left:33.0px;top:395.7px;font-size:11.5px;color:#2a2a2a;letter-spacing:0.5px;">24388</div>
<div class="a" style="left:78px;top:393px;width:104px;height:16px;background:#FDE4CD;border-bottom:1px solid #EAD6C2;"></div>
<div class="t" style="left:80.8px;top:395.7px;font-size:11.5px;color:#2a2a2a;letter-spacing:0.5px;width:101.2px;overflow:hidden">WS0970.05.17</div>
<div class="a" style="left:182px;top:393px;width:185px;height:16px;background:#FDE4CD;border-bottom:1px solid #EAD6C2;border-left:1px solid #EAD6C2;"></div>
<div class="t" style="left:185.4px;top:395.7px;font-size:11.5px;color:#2a2a2a;letter-spacing:0.5px;width:181.6px;overflow:hidden">5/27/2017 8:22:00 PM</div>
<div class="a" style="left:367px;top:393px;width:87px;height:16px;background:#FDE4CD;border-bottom:1px solid #EAD6C2;border-left:1px solid #EAD6C2;"></div>
<div class="t" style="left:369.5px;top:395.7px;font-size:11.5px;color:#2a2a2a;letter-spacing:0.5px;width:84.5px;overflow:hidden">2017-05-31</div>
<div class="a" style="left:454px;top:393px;width:64px;height:16px;background:#FDE4CD;border-bottom:1px solid #EAD6C2;border-left:1px solid #EAD6C2;"></div>
<div class="t" style="left:457.5px;top:395.7px;font-size:11.5px;color:#2a2a2a;letter-spacing:0.3px;width:60.5px;overflow:hidden">Scandinavi</div>
<div class="a" style="left:29px;top:409px;width:49px;height:17px;background:#D4D0C8;border-top:1px solid #fff;border-bottom:1px solid #404040;border-right:1px solid #404040"></div>
<div class="t" style="left:33.0px;top:412.4px;font-size:11.5px;color:#2a2a2a;letter-spacing:0.5px;">24387</div>
<div class="a" style="left:78px;top:409px;width:104px;height:17px;background:#FFFFFF;border-bottom:1px solid #E0DCDC;"></div>
<div class="t" style="left:80.8px;top:412.4px;font-size:11.5px;color:#2a2a2a;letter-spacing:0.5px;width:101.2px;overflow:hidden">WS0969.05.17</div>
<div class="a" style="left:182px;top:409px;width:185px;height:17px;background:#FFFFFF;border-bottom:1px solid #E0DCDC;border-left:1px solid #E0DCDC;"></div>
<div class="t" style="left:185.4px;top:412.4px;font-size:11.5px;color:#2a2a2a;letter-spacing:0.5px;width:181.6px;overflow:hidden">5/27/2017 8:21:00 PM</div>
<div class="a" style="left:367px;top:409px;width:87px;height:17px;background:#FFFFFF;border-bottom:1px solid #E0DCDC;border-left:1px solid #E0DCDC;"></div>
<div class="t" style="left:369.5px;top:412.4px;font-size:11.5px;color:#2a2a2a;letter-spacing:0.5px;width:84.5px;overflow:hidden">2017-05-31</div>
<div class="a" style="left:454px;top:409px;width:64px;height:17px;background:#FFFFFF;border-bottom:1px solid #E0DCDC;border-left:1px solid #E0DCDC;"></div>
<div class="t" style="left:457.5px;top:412.4px;font-size:11.5px;color:#2a2a2a;letter-spacing:0.3px;width:60.5px;overflow:hidden">Scandinavi</div>
<div class="a" style="left:29px;top:426px;width:49px;height:17px;background:#D4D0C8;border-top:1px solid #fff;border-bottom:1px solid #404040;border-right:1px solid #404040"></div>
<div class="t" style="left:33.0px;top:429.1px;font-size:11.5px;color:#2a2a2a;letter-spacing:0.5px;">24386</div>
<div class="a" style="left:78px;top:426px;width:104px;height:17px;background:#FFFFFF;border-bottom:1px solid #E0DCDC;"></div>
<div class="t" style="left:80.8px;top:429.1px;font-size:11.5px;color:#2a2a2a;letter-spacing:0.5px;width:101.2px;overflow:hidden">WS0968.05.17</div>
<div class="a" style="left:182px;top:426px;width:185px;height:17px;background:#FFFFFF;border-bottom:1px solid #E0DCDC;border-left:1px solid #E0DCDC;"></div>
<div class="t" style="left:185.4px;top:429.1px;font-size:11.5px;color:#2a2a2a;letter-spacing:0.5px;width:181.6px;overflow:hidden">5/21/2017 5:33:00 PM</div>
<div class="a" style="left:367px;top:426px;width:87px;height:17px;background:#FFFFFF;border-bottom:1px solid #E0DCDC;border-left:1px solid #E0DCDC;"></div>
<div class="t" style="left:369.5px;top:429.1px;font-size:11.5px;color:#2a2a2a;letter-spacing:0.5px;width:84.5px;overflow:hidden">2017-05-31</div>
<div class="a" style="left:454px;top:426px;width:64px;height:17px;background:#FFFFFF;border-bottom:1px solid #E0DCDC;border-left:1px solid #E0DCDC;"></div>
<div class="t" style="left:457.5px;top:429.1px;font-size:11.5px;color:#2a2a2a;letter-spacing:0.3px;width:60.5px;overflow:hidden">TEST NG</div>
<div class="a" style="left:29px;top:443px;width:49px;height:16px;background:#D4D0C8;border-top:1px solid #fff;border-bottom:1px solid #404040;border-right:1px solid #404040"></div>
<div class="t" style="left:33.0px;top:445.8px;font-size:11.5px;color:#2a2a2a;letter-spacing:0.5px;">24383</div>
<div class="a" style="left:78px;top:443px;width:104px;height:16px;background:#FDE4CD;border-bottom:1px solid #EAD6C2;"></div>
<div class="t" style="left:80.8px;top:445.8px;font-size:11.5px;color:#2a2a2a;letter-spacing:0.5px;width:101.2px;overflow:hidden">WS0965.05.17</div>
<div class="a" style="left:182px;top:443px;width:185px;height:16px;background:#FDE4CD;border-bottom:1px solid #EAD6C2;border-left:1px solid #EAD6C2;"></div>
<div class="t" style="left:185.4px;top:445.8px;font-size:11.5px;color:#2a2a2a;letter-spacing:0.5px;width:181.6px;overflow:hidden">5/9/2017 11:16:00 AM</div>
<div class="a" style="left:367px;top:443px;width:87px;height:16px;background:#FDE4CD;border-bottom:1px solid #EAD6C2;border-left:1px solid #EAD6C2;"></div>
<div class="t" style="left:369.5px;top:445.8px;font-size:11.5px;color:#2a2a2a;letter-spacing:0.5px;width:84.5px;overflow:hidden">2017-05-12</div>
<div class="a" style="left:454px;top:443px;width:64px;height:16px;background:#FDE4CD;border-bottom:1px solid #EAD6C2;border-left:1px solid #EAD6C2;"></div>
<div class="t" style="left:457.5px;top:445.8px;font-size:11.5px;color:#2a2a2a;letter-spacing:0.3px;width:60.5px;overflow:hidden">REGIONAL</div>
<div class="a" style="left:29px;top:459px;width:49px;height:17px;background:#D4D0C8;border-top:1px solid #fff;border-bottom:1px solid #404040;border-right:1px solid #404040"></div>
<div class="t" style="left:33.0px;top:462.5px;font-size:11.5px;color:#2a2a2a;letter-spacing:0.5px;">24382</div>
<div class="a" style="left:78px;top:459px;width:104px;height:17px;background:#FDE4CD;border-bottom:1px solid #EAD6C2;"></div>
<div class="t" style="left:80.8px;top:462.5px;font-size:11.5px;color:#2a2a2a;letter-spacing:0.5px;width:101.2px;overflow:hidden">WS0964.05.17</div>
<div class="a" style="left:182px;top:459px;width:185px;height:17px;background:#FDE4CD;border-bottom:1px solid #EAD6C2;border-left:1px solid #EAD6C2;"></div>
<div class="t" style="left:185.4px;top:462.5px;font-size:11.5px;color:#2a2a2a;letter-spacing:0.5px;width:181.6px;overflow:hidden">5/9/2017 11:16:00 AM</div>
<div class="a" style="left:367px;top:459px;width:87px;height:17px;background:#FDE4CD;border-bottom:1px solid #EAD6C2;border-left:1px solid #EAD6C2;"></div>
<div class="t" style="left:369.5px;top:462.5px;font-size:11.5px;color:#2a2a2a;letter-spacing:0.5px;width:84.5px;overflow:hidden">2017-05-12</div>
<div class="a" style="left:454px;top:459px;width:64px;height:17px;background:#FDE4CD;border-bottom:1px solid #EAD6C2;border-left:1px solid #EAD6C2;"></div>
<div class="t" style="left:457.5px;top:462.5px;font-size:11.5px;color:#2a2a2a;letter-spacing:0.3px;width:60.5px;overflow:hidden">REGIONAL</div>
<div class="a" style="left:29px;top:476px;width:49px;height:17px;background:#D4D0C8;border-top:1px solid #fff;border-bottom:1px solid #404040;border-right:1px solid #404040"></div>
<div class="t" style="left:33.0px;top:479.1px;font-size:11.5px;color:#2a2a2a;letter-spacing:0.5px;">24381</div>
<div class="a" style="left:78px;top:476px;width:104px;height:17px;background:#FDE4CD;border-bottom:1px solid #EAD6C2;"></div>
<div class="t" style="left:80.8px;top:479.1px;font-size:11.5px;color:#2a2a2a;letter-spacing:0.5px;width:101.2px;overflow:hidden">WS0963.05.17</div>
<div class="a" style="left:182px;top:476px;width:185px;height:17px;background:#FDE4CD;border-bottom:1px solid #EAD6C2;border-left:1px solid #EAD6C2;"></div>
<div class="t" style="left:185.4px;top:479.1px;font-size:11.5px;color:#2a2a2a;letter-spacing:0.5px;width:181.6px;overflow:hidden">5/9/2017 11:16:00 AM</div>
<div class="a" style="left:367px;top:476px;width:87px;height:17px;background:#FDE4CD;border-bottom:1px solid #EAD6C2;border-left:1px solid #EAD6C2;"></div>
<div class="t" style="left:369.5px;top:479.1px;font-size:11.5px;color:#2a2a2a;letter-spacing:0.5px;width:84.5px;overflow:hidden">2017-05-12</div>
<div class="a" style="left:454px;top:476px;width:64px;height:17px;background:#FDE4CD;border-bottom:1px solid #EAD6C2;border-left:1px solid #EAD6C2;"></div>
<div class="t" style="left:457.5px;top:479.1px;font-size:11.5px;color:#2a2a2a;letter-spacing:0.3px;width:60.5px;overflow:hidden">REGIONAL</div>
<div class="a" style="left:29px;top:493px;width:49px;height:16px;background:#D4D0C8;border-top:1px solid #fff;border-bottom:1px solid #404040;border-right:1px solid #404040"></div>
<div class="t" style="left:33.0px;top:495.8px;font-size:11.5px;color:#2a2a2a;letter-spacing:0.5px;">24379</div>
<div class="a" style="left:78px;top:493px;width:104px;height:16px;background:#FDE4CD;border-bottom:1px solid #EAD6C2;"></div>
<div class="t" style="left:80.8px;top:495.8px;font-size:11.5px;color:#2a2a2a;letter-spacing:0.5px;width:101.2px;overflow:hidden">WS0961.05.17</div>
<div class="a" style="left:182px;top:493px;width:185px;height:16px;background:#FDE4CD;border-bottom:1px solid #EAD6C2;border-left:1px solid #EAD6C2;"></div>
<div class="t" style="left:185.4px;top:495.8px;font-size:11.5px;color:#2a2a2a;letter-spacing:0.5px;width:181.6px;overflow:hidden">5/8/2017 2:01:00 PM</div>
<div class="a" style="left:367px;top:493px;width:87px;height:16px;background:#FDE4CD;border-bottom:1px solid #EAD6C2;border-left:1px solid #EAD6C2;"></div>
<div class="t" style="left:369.5px;top:495.8px;font-size:11.5px;color:#2a2a2a;letter-spacing:0.5px;width:84.5px;overflow:hidden">2017-05-10</div>
<div class="a" style="left:454px;top:493px;width:64px;height:16px;background:#FDE4CD;border-bottom:1px solid #EAD6C2;border-left:1px solid #EAD6C2;"></div>
<div class="t" style="left:457.5px;top:495.8px;font-size:11.5px;color:#2a2a2a;letter-spacing:0.3px;width:60.5px;overflow:hidden">REGIONAL</div>
<div class="a" style="left:29px;top:509px;width:49px;height:17px;background:#D4D0C8;border-top:1px solid #fff;border-bottom:1px solid #404040;border-right:1px solid #404040"></div>
<div class="t" style="left:33.0px;top:512.5px;font-size:11.5px;color:#2a2a2a;letter-spacing:0.5px;">24378</div>
<div class="a" style="left:78px;top:509px;width:104px;height:17px;background:#FDE4CD;border-bottom:1px solid #EAD6C2;"></div>
<div class="t" style="left:80.8px;top:512.5px;font-size:11.5px;color:#2a2a2a;letter-spacing:0.5px;width:101.2px;overflow:hidden">WS0960.05.17</div>
<div class="a" style="left:182px;top:509px;width:185px;height:17px;background:#FDE4CD;border-bottom:1px solid #EAD6C2;border-left:1px solid #EAD6C2;"></div>
<div class="t" style="left:185.4px;top:512.5px;font-size:11.5px;color:#2a2a2a;letter-spacing:0.5px;width:181.6px;overflow:hidden">5/8/2017 2:01:00 PM</div>
<div class="a" style="left:367px;top:509px;width:87px;height:17px;background:#FDE4CD;border-bottom:1px solid #EAD6C2;border-left:1px solid #EAD6C2;"></div>
<div class="t" style="left:369.5px;top:512.5px;font-size:11.5px;color:#2a2a2a;letter-spacing:0.5px;width:84.5px;overflow:hidden">2017-05-10</div>
<div class="a" style="left:454px;top:509px;width:64px;height:17px;background:#FDE4CD;border-bottom:1px solid #EAD6C2;border-left:1px solid #EAD6C2;"></div>
<div class="t" style="left:457.5px;top:512.5px;font-size:11.5px;color:#2a2a2a;letter-spacing:0.3px;width:60.5px;overflow:hidden">REGIONAL</div>
<div class="a" style="left:29px;top:526px;width:49px;height:17px;background:#D4D0C8;border-top:1px solid #fff;border-bottom:1px solid #404040;border-right:1px solid #404040"></div>
<div class="t" style="left:33.0px;top:529.2px;font-size:11.5px;color:#2a2a2a;letter-spacing:0.5px;">24377</div>
<div class="a" style="left:78px;top:526px;width:104px;height:17px;background:#FDE4CD;border-bottom:1px solid #EAD6C2;"></div>
<div class="t" style="left:80.8px;top:529.2px;font-size:11.5px;color:#2a2a2a;letter-spacing:0.5px;width:101.2px;overflow:hidden">WS0959.05.17</div>
<div class="a" style="left:182px;top:526px;width:185px;height:17px;background:#FDE4CD;border-bottom:1px solid #EAD6C2;border-left:1px solid #EAD6C2;"></div>
<div class="t" style="left:185.4px;top:529.2px;font-size:11.5px;color:#2a2a2a;letter-spacing:0.5px;width:181.6px;overflow:hidden">5/8/2017 12:38:00 PM</div>
<div class="a" style="left:367px;top:526px;width:87px;height:17px;background:#FDE4CD;border-bottom:1px solid #EAD6C2;border-left:1px solid #EAD6C2;"></div>
<div class="t" style="left:369.5px;top:529.2px;font-size:11.5px;color:#2a2a2a;letter-spacing:0.5px;width:84.5px;overflow:hidden">2017-05-12</div>
<div class="a" style="left:454px;top:526px;width:64px;height:17px;background:#FDE4CD;border-bottom:1px solid #EAD6C2;border-left:1px solid #EAD6C2;"></div>
<div class="t" style="left:457.5px;top:529.2px;font-size:11.5px;color:#2a2a2a;letter-spacing:0.3px;width:60.5px;overflow:hidden">Braathens</div>
<div class="a" style="left:29px;top:543px;width:49px;height:16px;background:#D4D0C8;border-top:1px solid #fff;border-bottom:1px solid #404040;border-right:1px solid #404040"></div>
<div class="t" style="left:33.0px;top:545.9px;font-size:11.5px;color:#2a2a2a;letter-spacing:0.5px;">24376</div>
<div class="a" style="left:78px;top:543px;width:104px;height:16px;background:#FFFFFF;border-bottom:1px solid #E0DCDC;"></div>
<div class="t" style="left:80.8px;top:545.9px;font-size:11.5px;color:#2a2a2a;letter-spacing:0.5px;width:101.2px;overflow:hidden">WS0958.05.17</div>
<div class="a" style="left:182px;top:543px;width:185px;height:16px;background:#FFFFFF;border-bottom:1px solid #E0DCDC;border-left:1px solid #E0DCDC;"></div>
<div class="t" style="left:185.4px;top:545.9px;font-size:11.5px;color:#2a2a2a;letter-spacing:0.5px;width:181.6px;overflow:hidden">5/8/2017 12:38:00 PM</div>
<div class="a" style="left:367px;top:543px;width:87px;height:16px;background:#FFFFFF;border-bottom:1px solid #E0DCDC;border-left:1px solid #E0DCDC;"></div>
<div class="t" style="left:369.5px;top:545.9px;font-size:11.5px;color:#2a2a2a;letter-spacing:0.5px;width:84.5px;overflow:hidden">2017-05-12</div>
<div class="a" style="left:454px;top:543px;width:64px;height:16px;background:#FFFFFF;border-bottom:1px solid #E0DCDC;border-left:1px solid #E0DCDC;"></div>
<div class="t" style="left:457.5px;top:545.9px;font-size:11.5px;color:#2a2a2a;letter-spacing:0.3px;width:60.5px;overflow:hidden">Braathens</div>
<div class="a" style="left:29px;top:559px;width:49px;height:17px;background:#D4D0C8;border-top:1px solid #fff;border-bottom:1px solid #404040;border-right:1px solid #404040"></div>
<div class="t" style="left:33.0px;top:562.5px;font-size:11.5px;color:#2a2a2a;letter-spacing:0.5px;">24375</div>
<div class="a" style="left:78px;top:559px;width:104px;height:17px;background:#FFFFFF;border-bottom:1px solid #E0DCDC;"></div>
<div class="t" style="left:80.8px;top:562.5px;font-size:11.5px;color:#2a2a2a;letter-spacing:0.5px;width:101.2px;overflow:hidden">WS0957.05.17</div>
<div class="a" style="left:182px;top:559px;width:185px;height:17px;background:#FFFFFF;border-bottom:1px solid #E0DCDC;border-left:1px solid #E0DCDC;"></div>
<div class="t" style="left:185.4px;top:562.5px;font-size:11.5px;color:#2a2a2a;letter-spacing:0.5px;width:181.6px;overflow:hidden">5/8/2017 12:38:00 PM</div>
<div class="a" style="left:367px;top:559px;width:87px;height:17px;background:#FFFFFF;border-bottom:1px solid #E0DCDC;border-left:1px solid #E0DCDC;"></div>
<div class="t" style="left:369.5px;top:562.5px;font-size:11.5px;color:#2a2a2a;letter-spacing:0.5px;width:84.5px;overflow:hidden">2017-05-12</div>
<div class="a" style="left:454px;top:559px;width:64px;height:17px;background:#FFFFFF;border-bottom:1px solid #E0DCDC;border-left:1px solid #E0DCDC;"></div>
<div class="t" style="left:457.5px;top:562.5px;font-size:11.5px;color:#2a2a2a;letter-spacing:0.3px;width:60.5px;overflow:hidden">Braathens</div>
<div class="a" style="left:29px;top:576px;width:49px;height:17px;background:#D4D0C8;border-top:1px solid #fff;border-bottom:1px solid #404040;border-right:1px solid #404040"></div>
<div class="t" style="left:33.0px;top:579.2px;font-size:11.5px;color:#2a2a2a;letter-spacing:0.5px;">24374</div>
<div class="a" style="left:78px;top:576px;width:104px;height:17px;background:#FDE4CD;border-bottom:1px solid #EAD6C2;"></div>
<div class="t" style="left:80.8px;top:579.2px;font-size:11.5px;color:#2a2a2a;letter-spacing:0.5px;width:101.2px;overflow:hidden">WS0956.05.17</div>
<div class="a" style="left:182px;top:576px;width:185px;height:17px;background:#FDE4CD;border-bottom:1px solid #EAD6C2;border-left:1px solid #EAD6C2;"></div>
<div class="t" style="left:185.4px;top:579.2px;font-size:11.5px;color:#2a2a2a;letter-spacing:0.5px;width:181.6px;overflow:hidden">5/8/2017 12:38:00 PM</div>
<div class="a" style="left:367px;top:576px;width:87px;height:17px;background:#FDE4CD;border-bottom:1px solid #EAD6C2;border-left:1px solid #EAD6C2;"></div>
<div class="t" style="left:369.5px;top:579.2px;font-size:11.5px;color:#2a2a2a;letter-spacing:0.5px;width:84.5px;overflow:hidden">2017-05-12</div>
<div class="a" style="left:454px;top:576px;width:64px;height:17px;background:#FDE4CD;border-bottom:1px solid #EAD6C2;border-left:1px solid #EAD6C2;"></div>
<div class="t" style="left:457.5px;top:579.2px;font-size:11.5px;color:#2a2a2a;letter-spacing:0.3px;width:60.5px;overflow:hidden">Braathens</div>
<div class="a" style="left:29px;top:593px;width:49px;height:16px;background:#D4D0C8;border-top:1px solid #fff;border-bottom:1px solid #404040;border-right:1px solid #404040"></div>
<div class="t" style="left:33.0px;top:595.9px;font-size:11.5px;color:#2a2a2a;letter-spacing:0.5px;">24373</div>
<div class="a" style="left:78px;top:593px;width:104px;height:16px;background:#FDE4CD;border-bottom:1px solid #EAD6C2;"></div>
<div class="t" style="left:80.8px;top:595.9px;font-size:11.5px;color:#2a2a2a;letter-spacing:0.5px;width:101.2px;overflow:hidden">WS0955.05.17</div>
<div class="a" style="left:182px;top:593px;width:185px;height:16px;background:#FDE4CD;border-bottom:1px solid #EAD6C2;border-left:1px solid #EAD6C2;"></div>
<div class="t" style="left:185.4px;top:595.9px;font-size:11.5px;color:#2a2a2a;letter-spacing:0.5px;width:181.6px;overflow:hidden">5/8/2017 12:38:00 PM</div>
<div class="a" style="left:367px;top:593px;width:87px;height:16px;background:#FDE4CD;border-bottom:1px solid #EAD6C2;border-left:1px solid #EAD6C2;"></div>
<div class="t" style="left:369.5px;top:595.9px;font-size:11.5px;color:#2a2a2a;letter-spacing:0.5px;width:84.5px;overflow:hidden">2017-05-12</div>
<div class="a" style="left:454px;top:593px;width:64px;height:16px;background:#FDE4CD;border-bottom:1px solid #EAD6C2;border-left:1px solid #EAD6C2;"></div>
<div class="t" style="left:457.5px;top:595.9px;font-size:11.5px;color:#2a2a2a;letter-spacing:0.3px;width:60.5px;overflow:hidden">Braathens</div>
<div class="a" style="left:29px;top:609px;width:49px;height:17px;background:#D4D0C8;border-top:1px solid #fff;border-bottom:1px solid #404040;border-right:1px solid #404040"></div>
<div class="t" style="left:33.0px;top:612.6px;font-size:11.5px;color:#2a2a2a;letter-spacing:0.5px;">24372</div>
<div class="a" style="left:78px;top:609px;width:104px;height:17px;background:#FDE4CD;border-bottom:1px solid #EAD6C2;"></div>
<div class="t" style="left:80.8px;top:612.6px;font-size:11.5px;color:#2a2a2a;letter-spacing:0.5px;width:101.2px;overflow:hidden">WS0954.05.17</div>
<div class="a" style="left:182px;top:609px;width:185px;height:17px;background:#FDE4CD;border-bottom:1px solid #EAD6C2;border-left:1px solid #EAD6C2;"></div>
<div class="t" style="left:185.4px;top:612.6px;font-size:11.5px;color:#2a2a2a;letter-spacing:0.5px;width:181.6px;overflow:hidden">5/8/2017 12:38:00 PM</div>
<div class="a" style="left:367px;top:609px;width:87px;height:17px;background:#FDE4CD;border-bottom:1px solid #EAD6C2;border-left:1px solid #EAD6C2;"></div>
<div class="t" style="left:369.5px;top:612.6px;font-size:11.5px;color:#2a2a2a;letter-spacing:0.5px;width:84.5px;overflow:hidden">2017-05-12</div>
<div class="a" style="left:454px;top:609px;width:64px;height:17px;background:#FDE4CD;border-bottom:1px solid #EAD6C2;border-left:1px solid #EAD6C2;"></div>
<div class="t" style="left:457.5px;top:612.6px;font-size:11.5px;color:#2a2a2a;letter-spacing:0.3px;width:60.5px;overflow:hidden">Braathens</div>
<div class="a" style="left:29px;top:626px;width:49px;height:17px;background:#D4D0C8;border-top:1px solid #fff;border-bottom:1px solid #404040;border-right:1px solid #404040"></div>
<div class="t" style="left:33.0px;top:629.3px;font-size:11.5px;color:#2a2a2a;letter-spacing:0.5px;">24371</div>
<div class="a" style="left:78px;top:626px;width:104px;height:17px;background:#FDE4CD;border-bottom:1px solid #EAD6C2;"></div>
<div class="t" style="left:80.8px;top:629.3px;font-size:11.5px;color:#2a2a2a;letter-spacing:0.5px;width:101.2px;overflow:hidden">WS0953.05.17</div>
<div class="a" style="left:182px;top:626px;width:185px;height:17px;background:#FDE4CD;border-bottom:1px solid #EAD6C2;border-left:1px solid #EAD6C2;"></div>
<div class="t" style="left:185.4px;top:629.3px;font-size:11.5px;color:#2a2a2a;letter-spacing:0.5px;width:181.6px;overflow:hidden">5/8/2017 12:38:00 PM</div>
<div class="a" style="left:367px;top:626px;width:87px;height:17px;background:#FDE4CD;border-bottom:1px solid #EAD6C2;border-left:1px solid #EAD6C2;"></div>
<div class="t" style="left:369.5px;top:629.3px;font-size:11.5px;color:#2a2a2a;letter-spacing:0.5px;width:84.5px;overflow:hidden">2017-05-12</div>
<div class="a" style="left:454px;top:626px;width:64px;height:17px;background:#FDE4CD;border-bottom:1px solid #EAD6C2;border-left:1px solid #EAD6C2;"></div>
<div class="t" style="left:457.5px;top:629.3px;font-size:11.5px;color:#2a2a2a;letter-spacing:0.3px;width:60.5px;overflow:hidden">Braathens</div>
<div class="a" style="left:29px;top:643px;width:49px;height:16px;background:#D4D0C8;border-top:1px solid #fff;border-bottom:1px solid #404040;border-right:1px solid #404040"></div>
<div class="t" style="left:33.0px;top:645.9px;font-size:11.5px;color:#2a2a2a;letter-spacing:0.5px;">24369</div>
<div class="a" style="left:78px;top:643px;width:104px;height:16px;background:#FDE4CD;border-bottom:1px solid #EAD6C2;"></div>
<div class="t" style="left:80.8px;top:645.9px;font-size:11.5px;color:#2a2a2a;letter-spacing:0.5px;width:101.2px;overflow:hidden">WS0951.05.17</div>
<div class="a" style="left:182px;top:643px;width:185px;height:16px;background:#FDE4CD;border-bottom:1px solid #EAD6C2;border-left:1px solid #EAD6C2;"></div>
<div class="t" style="left:185.4px;top:645.9px;font-size:11.5px;color:#2a2a2a;letter-spacing:0.5px;width:181.6px;overflow:hidden">5/8/2017 12:38:00 PM</div>
<div class="a" style="left:367px;top:643px;width:87px;height:16px;background:#FDE4CD;border-bottom:1px solid #EAD6C2;border-left:1px solid #EAD6C2;"></div>
<div class="t" style="left:369.5px;top:645.9px;font-size:11.5px;color:#2a2a2a;letter-spacing:0.5px;width:84.5px;overflow:hidden">2017-05-12</div>
<div class="a" style="left:454px;top:643px;width:64px;height:16px;background:#FDE4CD;border-bottom:1px solid #EAD6C2;border-left:1px solid #EAD6C2;"></div>
<div class="t" style="left:457.5px;top:645.9px;font-size:11.5px;color:#2a2a2a;letter-spacing:0.3px;width:60.5px;overflow:hidden">Braathens</div>
<div class="a" style="left:29px;top:659px;width:49px;height:3px;background:#D4D0C8;border-top:1px solid #fff;border-right:1px solid #404040"></div>
<div class="a" style="left:78px;top:659px;width:104px;height:3px;background:#FDE4CD;"></div>
<div class="a" style="left:182px;top:659px;width:185px;height:3px;background:#FDE4CD;border-left:1px solid #EAD6C2;"></div>
<div class="a" style="left:367px;top:659px;width:87px;height:3px;background:#FDE4CD;border-left:1px solid #EAD6C2;"></div>
<div class="a" style="left:454px;top:659px;width:64px;height:3px;background:#FDE4CD;border-left:1px solid #EAD6C2;"></div>
</div>
<div class="a" style="left:29px;top:142px;width:2px;height:520px;background:#707070"></div>
<div class="sb" style="left:518px;top:142px;width:14px;height:14px"><svg class="a" style="left:2px;top:4px" width="8" height="5"><path d="M0 4.5h8L4 0.5z" fill="#000"/></svg></div>
<div class="sb" style="left:518px;top:156px;width:14px;height:14px"></div>
<div class="sb" style="left:518px;top:649px;width:14px;height:14px"><svg class="a" style="left:2px;top:4px" width="8" height="5"><path d="M0 0.5h8L4 4.5z" fill="#000"/></svg></div>
<div class="sb" style="left:29px;top:663px;width:15px;height:14px"><svg class="a" style="left:4px;top:2px" width="5" height="8"><path d="M4.5 0v8L0.5 4z" fill="#000"/></svg></div>
<div class="sb" style="left:44px;top:663px;width:14px;height:14px"></div>
<div class="sb" style="left:504px;top:663px;width:14px;height:14px"><svg class="a" style="left:4px;top:2px" width="5" height="8"><path d="M0.5 0v8L4.5 4z" fill="#000"/></svg></div>
<div class="a" style="left:518px;top:663px;width:14px;height:14px;background:#D4D0C8"></div>
<div class="a" style="left:27px;top:681px;width:177px;height:14px;border:1px solid;border-color:#808080 #fff #fff #808080"></div>
<div class="t" style="left:31.0px;top:684.4px;font-size:8.3px;color:#222;">Found 200 Work Orders</div>
<div class="grp" style="left:547px;top:86px;width:844px;height:633px;"></div>
<div class="a" style="left:553px;top:77px;width:157px;height:18px;background:#D4D0C8"></div>
<div class="t" style="left:555.0px;top:78.8px;font-size:16.9px;color:#0A0A80;font-weight:bold;">Service WO Editor:</div>
<div class="a" style="left:552px;top:97px;width:522px;height:21px;border:1px solid;border-color:#fff #808080 #808080 #fff"></div>
<div class="a" style="left:554px;top:100px;width:3px;height:15px;border:1px solid;border-color:#fff #808080 #808080 #fff"></div>
<div class="vsep" style="left:620px;top:99px;width:2px;height:18px;"></div>
<div class="vsep" style="left:684px;top:99px;width:2px;height:18px;"></div>
<div class="vsep" style="left:748px;top:99px;width:2px;height:18px;"></div>
<div class="vsep" style="left:812px;top:99px;width:2px;height:18px;"></div>
<div class="vsep" style="left:876px;top:99px;width:2px;height:18px;"></div>
<div class="vsep" style="left:940px;top:99px;width:2px;height:18px;"></div>
<div class="vsep" style="left:1004px;top:99px;width:2px;height:18px;"></div>
<svg class="a" style="left:565px;top:101px" width="13" height="13"><path d="M2.5 4.5h6q3 0 3 3t-3 3H5" fill="none" stroke="#104010" stroke-width="3"/><path d="M2.5 4.5h6q3 0 3 3t-3 3H5" fill="none" stroke="#30D030" stroke-width="1.5"/><path d="M0.5 4.5l3.5-3.5v7z" fill="#30D030" stroke="#104010" stroke-width="0.7"/></svg>
<div class="t" style="left:580.0px;top:103.5px;font-size:9.8px;color:#111;">Refresh</div>
<svg class="a" style="left:629px;top:100px" width="14" height="15"><path d="M4.5 3.5h5l2 2v7h-7z" fill="#40E0E8" stroke="#000" stroke-width="0.8"/><path d="M1 1l2 2M13 1l-2 2M1 14l2-2M13 14l-2-2M7 0v2M0 8h2M12 8h2" stroke="#404040" stroke-width="0.8"/></svg>
<div class="t" style="left:661.6px;top:103.5px;font-size:9.8px;color:#111;">Add</div>
<svg class="a" style="left:693px;top:100px" width="14" height="15"><rect x="1" y="1" width="6" height="6" fill="#2060C0" stroke="#000" stroke-width="0.8"/><path d="M8 4.5h3v5.5" fill="none" stroke="#000"/><path d="M9 9l2 2 2-2" fill="none" stroke="#000"/><rect x="5.5" y="11.5" width="8" height="3" fill="#fff" stroke="#C02020" stroke-width="0.8"/></svg>
<div class="t" style="left:711.6px;top:103.5px;font-size:9.8px;color:#111;">Update</div>
<svg class="a" style="left:757px;top:100px" width="12" height="16"><rect x="1" y="2" width="10" height="2" fill="#404040"/><rect x="4" y="0.5" width="4" height="2" fill="#404040"/><path d="M2 5h8l-1 10H3z" fill="#787878" stroke="#202020" stroke-width="0.8"/><path d="M4.5 6v8M6 6v8M7.5 6v8" stroke="#202020" stroke-width="0.7"/></svg>
<div class="t" style="left:778.6px;top:103.5px;font-size:9.8px;color:#111;">Delete</div>
<svg class="a" style="left:820px;top:100px" width="15" height="15"><path d="M1.5 8.5l3 5q3-8 9.5-12.5" fill="none" stroke="#D01818" stroke-width="2.6"/></svg>
<div class="t" style="left:840.0px;top:103.5px;font-size:9.8px;color:#111;">Comply</div>
<svg class="a" style="left:884px;top:101px" width="14" height="13"><rect x="0.5" y="0.5" width="13" height="12" fill="#fff" stroke="#102080"/><rect x="0.5" y="0.5" width="13" height="2" fill="#102080"/><path d="M7 4v8M10 4v8M1 6h12M1 9h12" stroke="#6080C0" stroke-width="0.8"/><path d="M0 6h5V4l3 3.5-3 3.5V9H0z" fill="#2050E0"/></svg>
<div class="t" style="left:902.7px;top:103.5px;font-size:9.8px;color:#111;">Set INT</div>
<svg class="a" style="left:948px;top:99px" width="16" height="17"><path d="M1 2l8 3v5l-8-3z" fill="#D8B060" stroke="#806020" stroke-width="0.6"/><path d="M5 6l9 3v6l-9-3z" fill="#E8C070" stroke="#806020" stroke-width="0.6"/><path d="M2 4l8 3M6 9l8 3" stroke="#40A040" stroke-width="1.5"/></svg>
<div class="t" style="left:986.0px;top:103.5px;font-size:9.8px;color:#111;">PO</div>
<div class="t" style="left:1119.4px;top:94.8px;font-size:13px;color:#3a3a3a;">Group:</div>
<div class="t" style="left:1165.0px;top:93.8px;font-size:14px;color:#E03030;">*</div>
<div class="fld" style="left:1076px;top:108px;width:141px;height:23px"><div class="dd" style="width:14px"></div></div>
<div class="t" style="left:1079.3px;top:112.0px;font-size:14px;color:#1818A8;font-weight:bold;">INTERIOR</div>
<div class="fld1" style="left:1221px;top:103px;width:157px;height:31px;"></div>
<div class="t" style="left:1233.4px;top:107.0px;font-size:20px;color:#1010B0;font-weight:bold;">WS0004.08.24</div>
<div class="t" style="left:580.0px;top:138.5px;font-size:13.5px;color:#3a3a3a;">WO Date:</div>
<div class="t" style="left:659.0px;top:137.8px;font-size:14px;color:#E03030;">*</div>
<div class="fld1" style="left:561px;top:153px;width:113px;height:25px;"></div>
<div class="t" style="left:590.7px;top:156.9px;font-size:13.8px;color:#1818A8;font-weight:bold;">07.08.20</div>
<div class="fld1" style="left:673px;top:153px;width:72px;height:25px;"></div>
<div class="t" style="left:691.4px;top:157.1px;font-size:13.7px;color:#1818A8;font-weight:bold;">13:39</div>
<div class="a" style="left:674px;top:129px;width:43px;height:25px;background:#C6C4F8;border-top:1px solid #fff;border-left:1px solid #fff;border-right:1px solid #606060;border-bottom:1px solid #606060"></div>
<svg class="a" style="left:688px;top:134px" width="15" height="14"><rect x="0.5" y="0.5" width="14" height="13" fill="#F4E8E8" stroke="#202040"/><rect x="0.5" y="0.5" width="14" height="3" fill="#2030A0"/><path d="M1 6h13M1 8.5h13M1 11h13M4 4v9M7.5 4v9M11 4v9" stroke="#C04848" stroke-width="0.8"/></svg>
<div class="t" style="left:895.8px;top:138.5px;font-size:13.5px;color:#3a3a3a;">Customer:</div>
<div class="t" style="left:968.0px;top:137.8px;font-size:14px;color:#E03030;">*</div>
<div class="fld" style="left:751px;top:153px;width:366px;height:23px"><div class="dd" style="width:14px"></div></div>
<div class="t" style="left:753.4px;top:157.1px;font-size:13.7px;color:#1818A8;font-weight:bold;">Air Lituanica UAB</div>
<div class="t" style="left:1166.0px;top:138.8px;font-size:13.5px;color:#3a3a3a;">Customer Order Reference:</div>
<div class="t" style="left:1361.0px;top:137.8px;font-size:14px;color:#E03030;">*</div>
<div class="fld1" style="left:1123px;top:153px;width:255px;height:25px;"></div>
<div class="t" style="left:1216.8px;top:156.3px;font-size:13.8px;color:#1818A8;font-weight:bold;">AL-0034/2</div>
<div class="t" style="left:656.0px;top:183.5px;font-size:13px;color:#3a3a3a;">PN:</div>
<div class="t" style="left:701.0px;top:182.8px;font-size:14px;color:#E03030;">*</div>
<div class="fld1" style="left:751px;top:178px;width:153px;height:20px;border-color:#505050"></div>
<div class="t" style="left:911.4px;top:183.2px;font-size:13px;color:#3a3a3a;">SN:</div>
<div class="t" style="left:955.5px;top:182.8px;font-size:14px;color:#E03030;">*</div>
<div class="t" style="left:1079.5px;top:183.7px;font-size:13.5px;color:#3a3a3a;">A/C Type:</div>
<div class="fld" style="left:561px;top:198px;width:225px;height:22px"><div class="dd" style="width:14px"></div></div>
<div class="t" style="left:563.0px;top:200.9px;font-size:14.2px;color:#1818A8;font-weight:bold;">806369SERIES</div>
<div class="fld1" style="left:795px;top:198px;width:254px;height:25px;"></div>
<div class="t" style="left:901.8px;top:201.3px;font-size:13.8px;color:#1818A8;font-weight:bold;">63241</div>
<div class="fld" style="left:1053px;top:198px;width:125px;height:22px"><div class="dd" style="width:14px"></div></div>
<div class="t" style="left:1055.3px;top:201.5px;font-size:14px;color:#1818A8;font-weight:bold;">B737-200</div>
<div class="t" style="left:735.5px;top:226.3px;font-size:13.8px;color:#3a3a3a;">Description:</div>
<div class="t" style="left:842.0px;top:226.8px;font-size:14px;color:#E03030;">*</div>
<div class="t" style="left:1037.0px;top:227.1px;font-size:13.5px;color:#3a3a3a;">Contract Type:</div>
<div class="t" style="left:1152.0px;top:226.8px;font-size:14px;color:#E03030;">*</div>
<div class="t" style="left:1194.0px;top:227.1px;font-size:13.5px;color:#3a3a3a;">A/C Reg:</div>
<div class="t" style="left:1264.0px;top:226.8px;font-size:14px;color:#E03030;">*</div>
<div class="t" style="left:1295.0px;top:227.3px;font-size:13.3px;color:#3a3a3a;">Treatment:</div>
<div class="t" style="left:1374.0px;top:226.8px;font-size:14px;color:#E03030;">*</div>
<div class="fld1" style="left:561px;top:241px;width:423px;height:26px;"></div>
<div class="t" style="left:563.0px;top:244.6px;font-size:14px;color:#1818A8;font-weight:bold;">OXYGEN CYLINDER&amp;VALVE ASSY</div>
<div class="fld" style="left:989px;top:241px;width:183px;height:23px"><div class="dd" style="width:14px"></div></div>
<div class="t" style="left:992.4px;top:246.1px;font-size:14px;color:#1818A8;font-weight:bold;">NA</div>
<div class="fld" style="left:1179px;top:241px;width:99px;height:23px"><div class="dd" style="width:14px"></div></div>
<div class="t" style="left:1181.7px;top:246.1px;font-size:14px;color:#1818A8;font-weight:bold;">VP-BWW</div>
<div class="fld" style="left:1291px;top:241px;width:86px;height:23px"><div class="dd" style="width:14px"></div></div>
<div class="t" style="left:1294.0px;top:246.1px;font-size:14px;color:#1818A8;font-weight:bold;">OH</div>
<div class="grp" style="left:561px;top:285px;width:324px;height:75px;"></div>
<div class="a" style="left:566px;top:279px;width:44px;height:12px;background:#D4D0C8"></div>
<div class="t" style="left:569.5px;top:278.9px;font-size:13.6px;color:#111;font-weight:bold;">Time:</div>
<div class="t" style="left:582.5px;top:299.1px;font-size:13.4px;color:#555;">TSO :</div>
<div class="fld1" style="left:631px;top:298px;width:86px;height:25px;"></div>
<div class="t" style="left:654.5px;top:300.8px;font-size:13.8px;color:#1818A8;font-weight:bold;">14369</div>
<div class="t" style="left:737.5px;top:299.1px;font-size:13.4px;color:#555;">TSN :</div>
<div class="fld1" style="left:786px;top:298px;width:86px;height:25px;"></div>
<div class="t" style="left:808.0px;top:300.8px;font-size:13.8px;color:#1818A8;font-weight:bold;">43769</div>
<div class="t" style="left:581.8px;top:331.1px;font-size:13.4px;color:#555;">CSO :</div>
<div class="fld1" style="left:631px;top:329px;width:86px;height:26px;"></div>
<div class="t" style="left:658.0px;top:332.6px;font-size:13.8px;color:#1818A8;font-weight:bold;">7425</div>
<div class="t" style="left:740.5px;top:331.1px;font-size:13.4px;color:#555;">CSN :</div>
<div class="fld1" style="left:786px;top:329px;width:86px;height:26px;"></div>
<div class="t" style="left:808.0px;top:332.6px;font-size:13.8px;color:#1818A8;font-weight:bold;">27463</div>
<div class="grp" style="left:884px;top:285px;width:493px;height:75px;"></div>
<div class="a" style="left:891px;top:279px;width:144px;height:12px;background:#D4D0C8"></div>
<div class="t" style="left:893.0px;top:278.6px;font-size:13.9px;color:#111;font-weight:bold;">Reason for Removal:</div>
<div class="a" style="left:1079px;top:279px;width:13px;height:12px;background:#D4D0C8"></div>
<div class="t" style="left:1081.5px;top:279.8px;font-size:14px;color:#E03030;">*</div>
<div class="fld1" style="left:898px;top:298px;width:451px;height:59px;"></div>
<div class="t" style="left:900.4px;top:301.8px;font-size:13.8px;color:#1818A8;font-weight:bold;">OVH is required</div>
<div class="track" style="left:1350px;top:298px;width:14px;height:58px"></div>
<div class="sb" style="left:1350px;top:298px;width:14px;height:14px"><svg class="a" style="left:2px;top:4px" width="8" height="5"><path d="M0 4.5h8L4 0.5z" fill="#909090"/></svg></div>
<div class="sb" style="left:1350px;top:342px;width:14px;height:14px"><svg class="a" style="left:2px;top:4px" width="8" height="5"><path d="M0 0.5h8L4 4.5z" fill="#909090"/></svg></div>
<div class="grp" style="left:561px;top:369px;width:689px;height:77px;"></div>
<div class="a" style="left:566px;top:363px;width:122px;height:12px;background:#D4D0C8"></div>
<div class="t" style="left:569.3px;top:362.4px;font-size:14px;color:#111;font-weight:bold;">Requested Work:</div>
<div class="a" style="left:728px;top:363px;width:13px;height:12px;background:#D4D0C8"></div>
<div class="t" style="left:730.5px;top:363.8px;font-size:14px;color:#E03030;">*</div>
<div class="fld1" style="left:575px;top:383px;width:648px;height:59px;"></div>
<div class="t" style="left:577.3px;top:386.0px;font-size:13.9px;color:#1818A8;font-weight:bold;">Perform overhaul in accordance with CMM 35-98-02 rev.date.01/02/2020</div>
<div class="track" style="left:1223px;top:383px;width:14px;height:58px"></div>
<div class="sb" style="left:1223px;top:383px;width:14px;height:14px"><svg class="a" style="left:2px;top:4px" width="8" height="5"><path d="M0 4.5h8L4 0.5z" fill="#909090"/></svg></div>
<div class="sb" style="left:1223px;top:427px;width:14px;height:14px"><svg class="a" style="left:2px;top:4px" width="8" height="5"><path d="M0 0.5h8L4 4.5z" fill="#909090"/></svg></div>
<div class="t" style="left:568.6px;top:446.4px;font-size:13.5px;color:#111;font-weight:bold;">Note:</div>
<div class="fld1" style="left:561px;top:459px;width:676px;height:48px;"></div>
<div class="t" style="left:562.9px;top:462.2px;font-size:13.9px;color:#1818A8;font-weight:bold;">Third overhaul</div>
<div class="track" style="left:1237px;top:459px;width:14px;height:47px"></div>
<div class="sb" style="left:1237px;top:459px;width:14px;height:13px"><svg class="a" style="left:2px;top:3px" width="8" height="5"><path d="M0 4.5h8L4 0.5z" fill="#909090"/></svg></div>
<div class="sb" style="left:1237px;top:492px;width:14px;height:14px"><svg class="a" style="left:2px;top:4px" width="8" height="5"><path d="M0 0.5h8L4 4.5z" fill="#909090"/></svg></div>
<div class="cb" style="left:1263px;top:370px;width:11px;height:11px"></div>
<svg class="a" style="left:1265px;top:372px" width="8" height="8"><path d="M0.8 3.5l2.2 2.3L7.2 1.2" stroke="#000" stroke-width="1.7" fill="none"/></svg>
<div class="t" style="left:1280.6px;top:369.8px;font-size:12.1px;color:#333;">Received</div>
<div class="cb" style="left:1263px;top:388px;width:11px;height:11px"></div>
<svg class="a" style="left:1265px;top:390px" width="8" height="8"><path d="M0.8 3.5l2.2 2.3L7.2 1.2" stroke="#000" stroke-width="1.7" fill="none"/></svg>
<div class="t" style="left:1280.6px;top:387.2px;font-size:12.1px;color:#333;">Disassembly</div>
<div class="cb" style="left:1263px;top:405px;width:11px;height:11px"></div>
<svg class="a" style="left:1265px;top:407px" width="8" height="8"><path d="M0.8 3.5l2.2 2.3L7.2 1.2" stroke="#000" stroke-width="1.7" fill="none"/></svg>
<div class="t" style="left:1280.6px;top:404.7px;font-size:12.1px;color:#333;">Cleaning</div>
<div class="cb" style="left:1263px;top:422px;width:11px;height:11px"></div>
<svg class="a" style="left:1265px;top:424px" width="8" height="8"><path d="M0.8 3.5l2.2 2.3L7.2 1.2" stroke="#000" stroke-width="1.7" fill="none"/></svg>
<div class="t" style="left:1280.6px;top:422.1px;font-size:12.1px;color:#333;">Paint Removal</div>
<div class="cb" style="left:1263px;top:440px;width:11px;height:11px"></div>
<svg class="a" style="left:1265px;top:442px" width="8" height="8"><path d="M0.8 3.5l2.2 2.3L7.2 1.2" stroke="#000" stroke-width="1.7" fill="none"/></svg>
<div class="t" style="left:1280.6px;top:439.5px;font-size:12.1px;color:#333;">Inspection</div>
<div class="cb" style="left:1263px;top:457px;width:11px;height:11px"></div>
<div class="t" style="left:1280.6px;top:456.9px;font-size:12.1px;color:#333;">NDT</div>
<div class="cb" style="left:1263px;top:475px;width:11px;height:11px"></div>
<svg class="a" style="left:1265px;top:477px" width="8" height="8"><path d="M0.8 3.5l2.2 2.3L7.2 1.2" stroke="#000" stroke-width="1.7" fill="none"/></svg>
<div class="t" style="left:1280.6px;top:474.3px;font-size:12.1px;color:#333;">Repair</div>
<div class="cb" style="left:1263px;top:492px;width:11px;height:11px"></div>
<div class="t" style="left:1280.6px;top:491.8px;font-size:12.1px;color:#333;">Painting</div>
<div class="cb" style="left:1263px;top:509px;width:11px;height:11px"></div>
<svg class="a" style="left:1265px;top:511px" width="8" height="8"><path d="M0.8 3.5l2.2 2.3L7.2 1.2" stroke="#000" stroke-width="1.7" fill="none"/></svg>
<div class="t" style="left:1280.6px;top:509.2px;font-size:12.1px;color:#333;">Assembly</div>
<div class="cb" style="left:561px;top:517px;width:11px;height:11px"></div>
<svg class="a" style="left:563px;top:519px" width="8" height="8"><path d="M0.8 3.5l2.2 2.3L7.2 1.2" stroke="#000" stroke-width="1.7" fill="none"/></svg>
<div class="t" style="left:578.3px;top:514.5px;font-size:14px;color:#111;font-weight:bold;">Strip Down</div>
<div class="cb" style="left:687px;top:517px;width:11px;height:11px"></div>
<div class="t" style="left:704.3px;top:514.6px;font-size:13.9px;color:#A01010;font-weight:bold;">On Hold</div>
<div class="cb" style="left:561px;top:543px;width:11px;height:11px"></div>
<div class="t" style="left:579.6px;top:538.5px;font-size:17.7px;color:#8C0A14;font-weight:bold;">AOG</div>
<div class="cb" style="left:641px;top:542px;width:11px;height:11px"></div>
<svg class="a" style="left:643px;top:544px" width="8" height="8"><path d="M0.8 3.5l2.2 2.3L7.2 1.2" stroke="#000" stroke-width="1.7" fill="none"/></svg>
<div class="t" style="left:657.7px;top:540.1px;font-size:14px;color:#701010;font-weight:bold;">Urgent</div>
<div class="cb" style="left:726px;top:542px;width:11px;height:11px"></div>
<div class="t" style="left:742.3px;top:540.3px;font-size:13.8px;color:#111;font-weight:bold;">Routine</div>
<div class="t" style="left:818.5px;top:514.9px;font-size:13.5px;color:#3a3a3a;">DeadLine:</div>
<div class="t" style="left:895.5px;top:514.8px;font-size:14px;color:#E03030;">*</div>
<div class="fld1" style="left:821px;top:530px;width:128px;height:25px;"></div>
<div class="t" style="left:857.0px;top:532.5px;font-size:14px;color:#1818A8;font-weight:bold;">25.12.20</div>
<div class="a" style="left:912px;top:509px;width:37px;height:23px;background:#C6C4F8;border-top:1px solid #fff;border-left:1px solid #fff;border-right:1px solid #606060;border-bottom:1px solid #606060"></div>
<svg class="a" style="left:923px;top:513px" width="15" height="14"><rect x="0.5" y="0.5" width="14" height="13" fill="#F4E8E8" stroke="#202040"/><rect x="0.5" y="0.5" width="14" height="3" fill="#2030A0"/><path d="M1 6h13M1 8.5h13M1 11h13M4 4v9M7.5 4v9M11 4v9" stroke="#C04848" stroke-width="0.8"/></svg>
<div class="t" style="left:954.8px;top:515.5px;font-size:13.5px;color:#3a3a3a;">Originator:</div>
<div class="t" style="left:1037.0px;top:514.8px;font-size:14px;color:#E03030;">*</div>
<div class="fld" style="left:952px;top:529px;width:70px;height:24px"><div class="dd" style="width:14px"></div></div>
<div class="t" style="left:954.8px;top:533.7px;font-size:13.8px;color:#1818A8;font-weight:bold;">DEM</div>
<div class="t" style="left:1188.4px;top:515.5px;font-size:13.5px;color:#3a3a3a;">Name:</div>
<div class="a" style="left:1025px;top:530px;width:353px;height:25px;background:#E6E2E6;border:1px solid #404040"></div>
<div class="t" style="left:1158.8px;top:532.4px;font-size:14.1px;color:#111;font-weight:bold;">DEMO USER</div>
<div class="a" style="left:547px;top:568px;width:394px;height:151px;border-top:1px solid #808080;border-right:1px solid #808080;box-shadow:1px 0 0 #fff, inset 0 1px 0 #fff, inset -1px 0 0 #fff"></div>
<div class="a" style="left:552px;top:563px;width:226px;height:12px;background:#D4D0C8"></div>
<div class="t" style="left:554.8px;top:563.2px;font-size:11.5px;color:#0A0A48;font-weight:bold;letter-spacing:0.72px;">Spare Parts Required for Treatment:</div>
<div class="a" style="left:561px;top:583px;width:366px;height:125px;background:#858185;border:1px solid;border-color:#404040 #fff #fff #404040"></div>
<div class="a" style="left:562px;top:584px;width:236px;height:18px;background:#D4D0C8;border:1px solid;border-color:#fff #404040 #404040 #fff"></div>
<div class="t" style="left:566.0px;top:586.6px;font-size:12.3px;color:#222;">No Spare PN were Found !</div>
<div class="grp" style="left:940px;top:568px;width:438px;height:151px;"></div>
<div class="a" style="left:945px;top:563px;width:161px;height:12px;background:#D4D0C8"></div>
<div class="t" style="left:948.2px;top:563.2px;font-size:11.5px;color:#0A0A48;font-weight:bold;letter-spacing:0.78px;">CMM Manual Information:</div>
<div class="a" style="left:955px;top:583px;width:407px;height:125px;background:#858185;border:1px solid;border-color:#404040 #fff #fff #404040"></div>
<div class="a" style="left:956px;top:584px;width:235px;height:18px;background:#D4D0C8;border:1px solid;border-color:#fff #404040 #404040 #fff"></div>
<div class="t" style="left:958.8px;top:586.6px;font-size:12.4px;color:#222;">No Manuals were Found !</div>
<svg class="a" style="left:0;top:0;z-index:50" width="200" height="200">
<path d="M62.3 62.3 L118.6 170 L152.5 147.5 Z" fill="#0E96F5"/>
<circle cx="142" cy="168.5" r="22.6" fill="#0E96F5" stroke="#F0F0F0" stroke-width="1"/>
<circle cx="142" cy="168.5" r="23.3" fill="none" stroke="#2a2a2a" stroke-width="1.3"/>
<text x="142" y="178" text-anchor="middle" font-family="Liberation Sans" font-weight="bold" font-size="22" fill="#fff">3</text>
</svg>
</body></html>
